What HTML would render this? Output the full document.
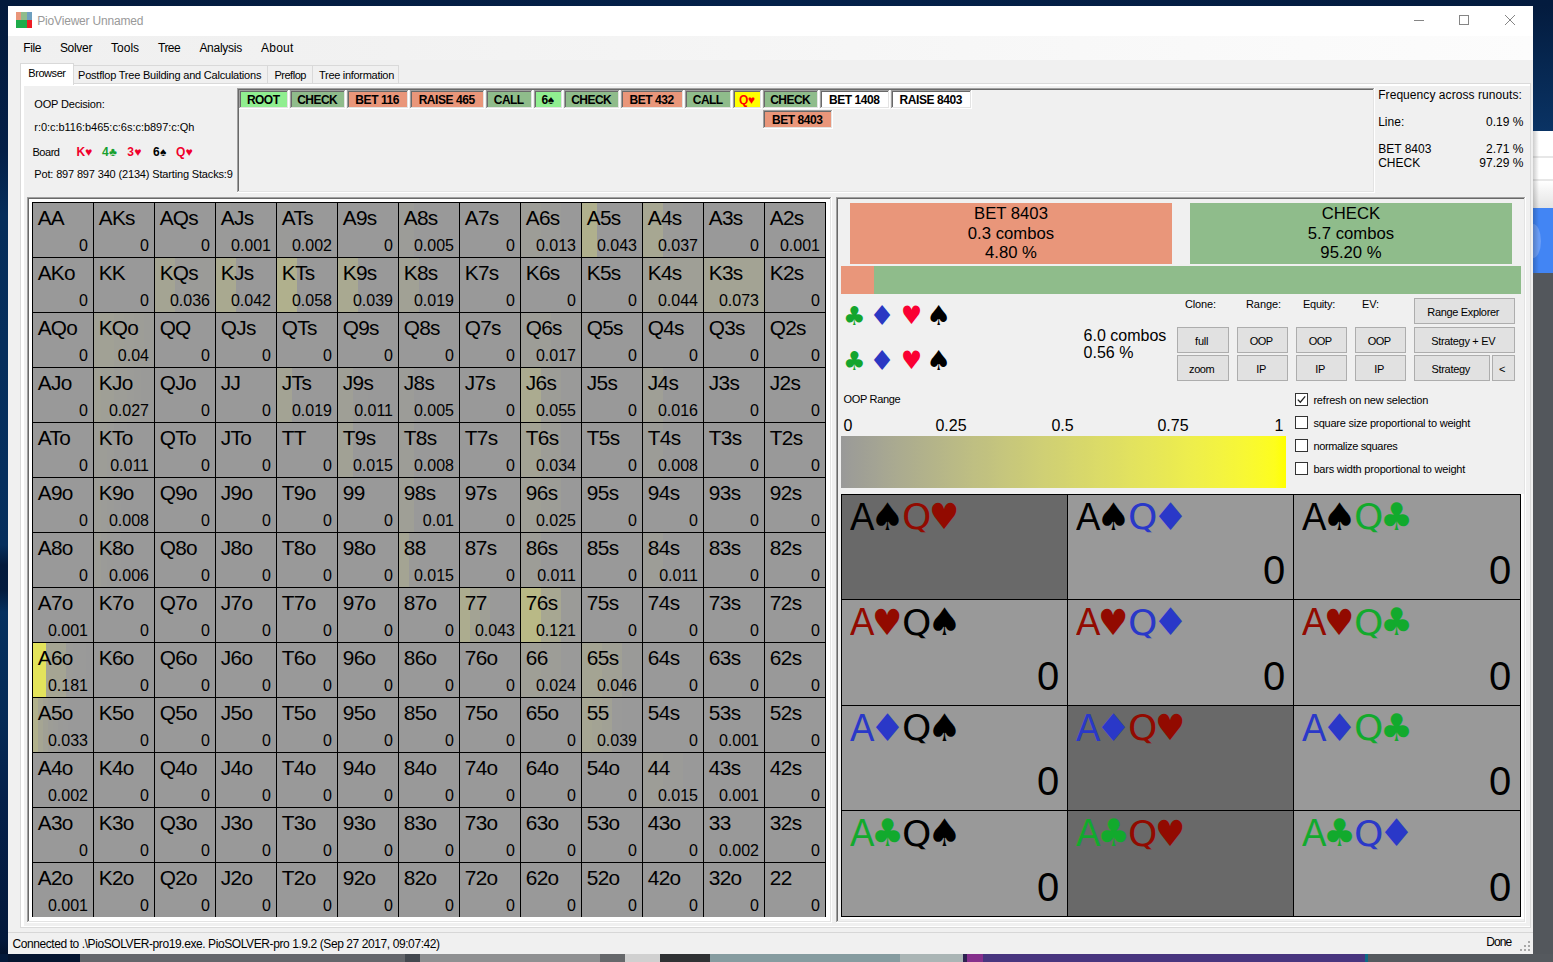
<!DOCTYPE html>
<html><head><meta charset="utf-8"><title>PioViewer Unnamed</title><style>html,body{margin:0;padding:0}body{width:1553px;height:962px;overflow:hidden;position:relative;background:#04204a;font-family:"Liberation Sans",sans-serif}
body>div,body>span,body>svg{position:absolute;display:block}body>span{white-space:pre}</style></head><body>
<div style="left:0;top:0;width:1553px;height:962px;background:#031a3c"></div>
<div style="left:0px;top:0px;width:8px;height:962px;background:linear-gradient(180deg,#031a3c 0,#041f47 150px,#052d5a 215px,#052f5e 480px,#052e5c 545px,#031a3c 565px,#031b3e 590px,#04305f 612px,#042a56 720px,#04204a 800px,#03183a 940px,#020f24 962px);"></div>
<div style="left:1533px;top:0px;width:20px;height:131px;background:linear-gradient(180deg,#031a3c 0,#06264f 60px,#0a3364 131px);"></div>
<div style="left:0px;top:0px;width:1553px;height:6px;background:linear-gradient(90deg,#031a3c 0,#04214a 50%,#031b3e 100%);"></div>
<div style="left:1533px;top:131px;width:20px;height:77px;background:linear-gradient(180deg,#fff 0,#fff 25px,#cfcfcf 26px,#fff 27px,#fff 48px,#cfcfcf 49px,#fff 50px,#f4f4f4 60px,#e4e4e4 77px);"></div>
<div style="left:1533px;top:208px;width:20px;height:65px;background:#4285f4;"></div>
<div style="left:1533px;top:224px;width:8px;height:34px;background:#6a9df6;border-radius:0 8px 8px 0 / 0 17px 17px 0"></div>
<div style="left:1533px;top:131px;width:6px;height:823px;background:linear-gradient(90deg,rgba(0,0,0,.2),rgba(0,0,0,0));"></div>
<div style="left:1533px;top:273px;width:20px;height:689px;background:#53575c;"></div>
<div style="left:0px;top:954px;width:8px;height:8px;background:#041a3a;"></div>
<div style="left:8px;top:954px;width:72px;height:8px;background:#05152f;"></div>
<div style="left:80px;top:954px;width:325px;height:8px;background:#64666b;"></div>
<div style="left:405px;top:954px;width:15px;height:8px;background:#44484f;"></div>
<div style="left:420px;top:954px;width:180px;height:8px;background:#8f9092;"></div>
<div style="left:600px;top:954px;width:25px;height:8px;background:#66686b;"></div>
<div style="left:625px;top:954px;width:35px;height:8px;background:#d0d0d0;"></div>
<div style="left:660px;top:954px;width:50px;height:8px;background:#303234;"></div>
<div style="left:710px;top:954px;width:190px;height:8px;background:#869ca0;"></div>
<div style="left:900px;top:954px;width:63px;height:8px;background:#aab5b5;"></div>
<div style="left:963px;top:954px;width:4px;height:8px;background:#2d2050;"></div>
<div style="left:967px;top:954px;width:16px;height:8px;background:#85308c;"></div>
<div style="left:983px;top:954px;width:382px;height:8px;background:#48357f;"></div>
<div style="left:1365px;top:954px;width:3px;height:8px;background:#0e6a86;"></div>
<div style="left:1368px;top:954px;width:185px;height:8px;background:#55595e;"></div>
<div style="left:8px;top:6px;width:1525px;height:948px;background:#f0f0f0;"></div>
<div style="left:8px;top:6px;width:1525px;height:30px;background:#fff;"></div>
<div style="left:16px;top:12px;width:5px;height:8px;background:#e9967a;"></div>
<div style="left:21px;top:12px;width:6px;height:8px;background:#8fbc8b;"></div>
<div style="left:27px;top:12px;width:5px;height:8px;background:#6e9fbf;"></div>
<div style="left:16px;top:20px;width:11px;height:8px;background:#1fab4a;"></div>
<div style="left:27px;top:20px;width:5px;height:8px;background:#ed1c24;"></div>
<span style="left:37.30px;top:15.00px;font-size:12px;line-height:12px;color:#999;letter-spacing:-0.187px;">PioViewer Unnamed</span>
<div style="left:1414px;top:20px;width:10px;height:1px;background:#858585;"></div>
<div style="left:1459px;top:15px;width:10px;height:10px;background:transparent;border:1px solid #858585;box-sizing:border-box"></div>
<svg style="left:1504px;top:14px" width="12" height="12" viewBox="0 0 12 12"><path d="M1 1 L11 11 M11 1 L1 11" stroke="#858585" stroke-width="1" fill="none"/></svg>
<div style="left:8px;top:36px;width:1525px;height:24px;background:linear-gradient(90deg,#f0f0f0 0,#f1f1f1 18%,#fcfcfc 100%);"></div>
<span style="left:23.20px;top:42.00px;font-size:12px;line-height:12px;color:#000;letter-spacing:-0.334px;">File</span>
<span style="left:59.90px;top:42.00px;font-size:12px;line-height:12px;color:#000;letter-spacing:-0.303px;">Solver</span>
<span style="left:111.00px;top:42.00px;font-size:12px;line-height:12px;color:#000;letter-spacing:0.017px;">Tools</span>
<span style="left:158.10px;top:42.00px;font-size:12px;line-height:12px;color:#000;letter-spacing:-0.582px;">Tree</span>
<span style="left:199.40px;top:42.00px;font-size:12px;line-height:12px;color:#000;letter-spacing:-0.273px;">Analysis</span>
<span style="left:261.00px;top:42.00px;font-size:12px;line-height:12px;color:#000;letter-spacing:0.228px;">About</span>
<div style="left:20px;top:83px;width:1511px;height:845px;background:#fff;border:1px solid #dadada;box-sizing:border-box"></div>
<div style="left:24px;top:86px;width:1506px;height:840px;background:#f0f0f0;"></div>
<div style="left:73px;top:65px;width:195px;height:19px;background:#f0f0f0;border:1px solid #d9d9d9;box-sizing:border-box"></div>
<div style="left:267px;top:65px;width:46px;height:19px;background:#f0f0f0;border:1px solid #d9d9d9;box-sizing:border-box"></div>
<div style="left:312px;top:65px;width:87px;height:19px;background:#f0f0f0;border:1px solid #d9d9d9;box-sizing:border-box"></div>
<div style="left:20px;top:63px;width:54px;height:22px;background:#fff;border:1px solid #d9d9d9;border-bottom:none;box-sizing:border-box"></div>
<span style="left:28.30px;top:68.00px;font-size:11px;line-height:11px;color:#000;letter-spacing:-0.435px;">Browser</span>
<span style="left:78.00px;top:70.00px;font-size:11px;line-height:11px;color:#000;letter-spacing:-0.210px;">Postflop Tree Building and Calculations</span>
<span style="left:274.40px;top:70.00px;font-size:11px;line-height:11px;color:#000;letter-spacing:-0.465px;">Preflop</span>
<span style="left:319.00px;top:70.00px;font-size:11px;line-height:11px;color:#000;letter-spacing:-0.293px;">Tree information</span>
<span style="left:34.30px;top:99.00px;font-size:11px;line-height:11px;color:#000;letter-spacing:-0.173px;">OOP Decision:</span>
<span style="left:34.30px;top:122.00px;font-size:11px;line-height:11px;color:#000;letter-spacing:-0.038px;">r:0:c:b116:b465:c:6s:c:b897:c:Qh</span>
<span style="left:32.50px;top:147.00px;font-size:11px;line-height:11px;color:#000;letter-spacing:-0.471px;">Board</span>
<span style="left:76.50px;top:146.00px;font-size:12px;line-height:12px;color:#f0002c;font-weight:700;letter-spacing:-0.146px;">K♥</span>
<span style="left:102.00px;top:146.00px;font-size:12px;line-height:12px;color:#18a030;font-weight:700;letter-spacing:0.225px;">4♣</span>
<span style="left:127.30px;top:146.00px;font-size:12px;line-height:12px;color:#f0002c;font-weight:700;letter-spacing:0.200px;">3♥</span>
<span style="left:153.00px;top:146.00px;font-size:12px;line-height:12px;color:#000;font-weight:700;letter-spacing:0.275px;">6♠</span>
<span style="left:176.00px;top:146.00px;font-size:12px;line-height:12px;color:#f0002c;font-weight:700;letter-spacing:0.271px;">Q♥</span>
<span style="left:34.30px;top:169.00px;font-size:11px;line-height:11px;color:#000;letter-spacing:-0.158px;">Pot: 897 897 340 (2134) Starting Stacks:9</span>
<div style="left:237px;top:88px;width:1138px;height:105px;background:#fff;"></div>
<div style="left:237px;top:88px;width:1137px;height:104px;background:#a0a0a0;"></div>
<div style="left:238px;top:89px;width:1136px;height:103px;background:#e3e3e3;"></div>
<div style="left:238px;top:89px;width:1135px;height:102px;background:#696969;"></div>
<div style="left:239px;top:90px;width:1134px;height:101px;background:#f0f0f0;"></div>
<div style="left:239px;top:90px;width:50px;height:19px;background:#fff;"></div>
<div style="left:239px;top:90px;width:49px;height:18px;background:#a0a0a0;"></div>
<div style="left:240px;top:91px;width:48px;height:17px;background:#e3e3e3;"></div>
<div style="left:240px;top:91px;width:47px;height:16px;background:#696969;"></div>
<div style="left:241px;top:92px;width:46px;height:15px;background:#90ee90;"></div>
<span style="left:246.99px;top:94.00px;font-size:12px;line-height:12px;color:#000;font-weight:700;letter-spacing:-0.563px;">ROOT</span>
<div style="left:290px;top:90px;width:56px;height:19px;background:#fff;"></div>
<div style="left:290px;top:90px;width:55px;height:18px;background:#a0a0a0;"></div>
<div style="left:291px;top:91px;width:54px;height:17px;background:#e3e3e3;"></div>
<div style="left:291px;top:91px;width:53px;height:16px;background:#696969;"></div>
<div style="left:292px;top:92px;width:52px;height:15px;background:#8fbc8b;"></div>
<span style="left:297.25px;top:94.00px;font-size:12px;line-height:12px;color:#000;font-weight:700;letter-spacing:-0.555px;">CHECK</span>
<div style="left:347px;top:90px;width:62px;height:19px;background:#fff;"></div>
<div style="left:347px;top:90px;width:61px;height:18px;background:#a0a0a0;"></div>
<div style="left:348px;top:91px;width:60px;height:17px;background:#e3e3e3;"></div>
<div style="left:348px;top:91px;width:59px;height:16px;background:#696969;"></div>
<div style="left:349px;top:92px;width:58px;height:15px;background:#e9967a;"></div>
<span style="left:355.37px;top:94.00px;font-size:12px;line-height:12px;color:#000;font-weight:700;letter-spacing:-0.434px;">BET 116</span>
<div style="left:410px;top:90px;width:75px;height:19px;background:#fff;"></div>
<div style="left:410px;top:90px;width:74px;height:18px;background:#a0a0a0;"></div>
<div style="left:411px;top:91px;width:73px;height:17px;background:#e3e3e3;"></div>
<div style="left:411px;top:91px;width:72px;height:16px;background:#696969;"></div>
<div style="left:412px;top:92px;width:71px;height:15px;background:#e9967a;"></div>
<span style="left:418.64px;top:94.00px;font-size:12px;line-height:12px;color:#000;font-weight:700;letter-spacing:-0.434px;">RAISE 465</span>
<div style="left:486px;top:90px;width:47px;height:19px;background:#fff;"></div>
<div style="left:486px;top:90px;width:46px;height:18px;background:#a0a0a0;"></div>
<div style="left:487px;top:91px;width:45px;height:17px;background:#e3e3e3;"></div>
<div style="left:487px;top:91px;width:44px;height:16px;background:#696969;"></div>
<div style="left:488px;top:92px;width:43px;height:15px;background:#8fbc8b;"></div>
<span style="left:493.74px;top:94.00px;font-size:12px;line-height:12px;color:#000;font-weight:700;letter-spacing:-0.520px;">CALL</span>
<div style="left:534px;top:90px;width:29px;height:19px;background:#fff;"></div>
<div style="left:534px;top:90px;width:28px;height:18px;background:#a0a0a0;"></div>
<div style="left:535px;top:91px;width:27px;height:17px;background:#e3e3e3;"></div>
<div style="left:535px;top:91px;width:26px;height:16px;background:#696969;"></div>
<div style="left:536px;top:92px;width:25px;height:15px;background:#90ee90;"></div>
<span style="left:541.60px;top:94.00px;font-size:12px;line-height:12px;color:#000;font-weight:700;letter-spacing:-0.424px;">6♠</span>
<div style="left:564px;top:90px;width:56px;height:19px;background:#fff;"></div>
<div style="left:564px;top:90px;width:55px;height:18px;background:#a0a0a0;"></div>
<div style="left:565px;top:91px;width:54px;height:17px;background:#e3e3e3;"></div>
<div style="left:565px;top:91px;width:53px;height:16px;background:#696969;"></div>
<div style="left:566px;top:92px;width:52px;height:15px;background:#8fbc8b;"></div>
<span style="left:571.25px;top:94.00px;font-size:12px;line-height:12px;color:#000;font-weight:700;letter-spacing:-0.555px;">CHECK</span>
<div style="left:621px;top:90px;width:63px;height:19px;background:#fff;"></div>
<div style="left:621px;top:90px;width:62px;height:18px;background:#a0a0a0;"></div>
<div style="left:622px;top:91px;width:61px;height:17px;background:#e3e3e3;"></div>
<div style="left:622px;top:91px;width:60px;height:16px;background:#696969;"></div>
<div style="left:623px;top:92px;width:59px;height:15px;background:#e9967a;"></div>
<span style="left:629.56px;top:94.00px;font-size:12px;line-height:12px;color:#000;font-weight:700;letter-spacing:-0.440px;">BET 432</span>
<div style="left:685px;top:90px;width:47px;height:19px;background:#fff;"></div>
<div style="left:685px;top:90px;width:46px;height:18px;background:#a0a0a0;"></div>
<div style="left:686px;top:91px;width:45px;height:17px;background:#e3e3e3;"></div>
<div style="left:686px;top:91px;width:44px;height:16px;background:#696969;"></div>
<div style="left:687px;top:92px;width:43px;height:15px;background:#8fbc8b;"></div>
<span style="left:692.74px;top:94.00px;font-size:12px;line-height:12px;color:#000;font-weight:700;letter-spacing:-0.520px;">CALL</span>
<div style="left:733px;top:90px;width:29px;height:19px;background:#fff;"></div>
<div style="left:733px;top:90px;width:28px;height:18px;background:#a0a0a0;"></div>
<div style="left:734px;top:91px;width:27px;height:17px;background:#e3e3e3;"></div>
<div style="left:734px;top:91px;width:26px;height:16px;background:#696969;"></div>
<div style="left:735px;top:92px;width:25px;height:15px;background:#ffff00;"></div>
<span style="left:739.01px;top:94.00px;font-size:12px;line-height:12px;color:#ff0000;font-weight:700;letter-spacing:-0.535px;">Q♥</span>
<div style="left:763px;top:90px;width:56px;height:19px;background:#fff;"></div>
<div style="left:763px;top:90px;width:55px;height:18px;background:#a0a0a0;"></div>
<div style="left:764px;top:91px;width:54px;height:17px;background:#e3e3e3;"></div>
<div style="left:764px;top:91px;width:53px;height:16px;background:#696969;"></div>
<div style="left:765px;top:92px;width:52px;height:15px;background:#8fbc8b;"></div>
<span style="left:770.25px;top:94.00px;font-size:12px;line-height:12px;color:#000;font-weight:700;letter-spacing:-0.555px;">CHECK</span>
<div style="left:820px;top:90px;width:70px;height:19px;background:#fff;"></div>
<div style="left:820px;top:90px;width:69px;height:18px;background:#a0a0a0;"></div>
<div style="left:821px;top:91px;width:68px;height:17px;background:#e3e3e3;"></div>
<div style="left:821px;top:91px;width:67px;height:16px;background:#696969;"></div>
<div style="left:822px;top:92px;width:66px;height:15px;background:#fff;"></div>
<span style="left:828.94px;top:94.00px;font-size:12px;line-height:12px;color:#000;font-weight:700;letter-spacing:-0.439px;">BET 1408</span>
<div style="left:891px;top:90px;width:81px;height:19px;background:#fff;"></div>
<div style="left:891px;top:90px;width:80px;height:18px;background:#a0a0a0;"></div>
<div style="left:892px;top:91px;width:79px;height:17px;background:#e3e3e3;"></div>
<div style="left:892px;top:91px;width:78px;height:16px;background:#696969;"></div>
<div style="left:893px;top:92px;width:77px;height:15px;background:#fff;"></div>
<span style="left:899.52px;top:94.00px;font-size:12px;line-height:12px;color:#000;font-weight:700;letter-spacing:-0.434px;">RAISE 8403</span>
<div style="left:763px;top:110px;width:70px;height:19px;background:#fff;"></div>
<div style="left:763px;top:110px;width:69px;height:18px;background:#a0a0a0;"></div>
<div style="left:764px;top:111px;width:68px;height:17px;background:#e3e3e3;"></div>
<div style="left:764px;top:111px;width:67px;height:16px;background:#696969;"></div>
<div style="left:765px;top:112px;width:66px;height:15px;background:#e9967a;"></div>
<span style="left:771.94px;top:114.00px;font-size:12px;line-height:12px;color:#000;font-weight:700;letter-spacing:-0.439px;">BET 8403</span>
<span style="left:1378.20px;top:89.00px;font-size:12px;line-height:12px;color:#000;letter-spacing:0.065px;">Frequency across runouts:</span>
<span style="left:1378.20px;top:116.00px;font-size:12px;line-height:12px;color:#000;">Line:</span>
<span style="left:1486.04px;top:116.00px;font-size:12px;line-height:12px;color:#000;">0.19 %</span>
<span style="left:1378.20px;top:143.00px;font-size:12px;line-height:12px;color:#000;">BET 8403</span>
<span style="left:1486.04px;top:143.00px;font-size:12px;line-height:12px;color:#000;">2.71 %</span>
<span style="left:1378.20px;top:157.00px;font-size:12px;line-height:12px;color:#000;">CHECK</span>
<span style="left:1479.37px;top:157.00px;font-size:12px;line-height:12px;color:#000;">97.29 %</span>
<div style="left:27px;top:197px;width:805px;height:726px;background:#fff;"></div>
<div style="left:27px;top:197px;width:804px;height:725px;background:#a0a0a0;"></div>
<div style="left:28px;top:198px;width:803px;height:724px;background:#e3e3e3;"></div>
<div style="left:28px;top:198px;width:802px;height:723px;background:#696969;"></div>
<div style="left:29px;top:199px;width:801px;height:722px;background:#fff;"></div>
<div style="left:32px;top:202px;width:794px;height:715px;background:#000;"></div>
<div style="left:33px;top:203px;width:60px;height:54px;background:#999999;"></div>
<span style="left:37.70px;top:208.00px;font-size:20.8px;line-height:20.8px;color:#000;letter-spacing:-0.734px;">AA</span>
<span style="left:79.10px;top:238.00px;font-size:16px;line-height:16px;color:#000;">0</span>
<div style="left:94px;top:203px;width:60px;height:54px;background:#999999;"></div>
<span style="left:98.70px;top:208.00px;font-size:20.8px;line-height:20.8px;color:#000;letter-spacing:-0.672px;">AKs</span>
<span style="left:140.10px;top:238.00px;font-size:16px;line-height:16px;color:#000;">0</span>
<div style="left:155px;top:203px;width:60px;height:54px;background:#999999;"></div>
<span style="left:159.70px;top:208.00px;font-size:20.8px;line-height:20.8px;color:#000;letter-spacing:-0.713px;">AQs</span>
<span style="left:201.10px;top:238.00px;font-size:16px;line-height:16px;color:#000;">0</span>
<div style="left:216px;top:203px;width:60px;height:54px;background:linear-gradient(90deg,#9a9a99 0.0px,#9a9a99 15.0px,#999999 15.0px,#999999 30.0px,#999999 30.0px,#999999 45.0px,#999999 45.0px,#999999 60.0px);"></div>
<span style="left:220.70px;top:208.00px;font-size:20.8px;line-height:20.8px;color:#000;letter-spacing:-0.611px;">AJs</span>
<span style="left:230.96px;top:238.00px;font-size:16px;line-height:16px;color:#000;">0.001</span>
<div style="left:277px;top:203px;width:60px;height:54px;background:linear-gradient(90deg,#9a9a98 0.0px,#9a9a98 15.0px,#999999 15.0px,#999999 30.0px,#999999 30.0px,#999999 45.0px,#999999 45.0px,#999999 60.0px);"></div>
<span style="left:281.70px;top:208.00px;font-size:20.8px;line-height:20.8px;color:#000;letter-spacing:-0.584px;">ATs</span>
<span style="left:291.96px;top:238.00px;font-size:16px;line-height:16px;color:#000;">0.002</span>
<div style="left:338px;top:203px;width:60px;height:54px;background:#999999;"></div>
<span style="left:342.70px;top:208.00px;font-size:20.8px;line-height:20.8px;color:#000;letter-spacing:-0.632px;">A9s</span>
<span style="left:384.10px;top:238.00px;font-size:16px;line-height:16px;color:#000;">0</span>
<div style="left:399px;top:203px;width:60px;height:54px;background:linear-gradient(90deg,#9c9c98 0.0px,#9c9c98 15.0px,#999999 15.0px,#999999 30.0px,#999999 30.0px,#999999 45.0px,#999999 45.0px,#999999 60.0px);"></div>
<span style="left:403.70px;top:208.00px;font-size:20.8px;line-height:20.8px;color:#000;letter-spacing:-0.632px;">A8s</span>
<span style="left:413.96px;top:238.00px;font-size:16px;line-height:16px;color:#000;">0.005</span>
<div style="left:460px;top:203px;width:60px;height:54px;background:#999999;"></div>
<span style="left:464.70px;top:208.00px;font-size:20.8px;line-height:20.8px;color:#000;letter-spacing:-0.632px;">A7s</span>
<span style="left:506.10px;top:238.00px;font-size:16px;line-height:16px;color:#000;">0</span>
<div style="left:521px;top:203px;width:60px;height:54px;background:linear-gradient(90deg,#9d9d97 0.0px,#9d9d97 20.0px,#9b9b98 20.0px,#9b9b98 40.0px,#999999 40.0px,#999999 60.0px);"></div>
<span style="left:525.70px;top:208.00px;font-size:20.8px;line-height:20.8px;color:#000;letter-spacing:-0.632px;">A6s</span>
<span style="left:535.96px;top:238.00px;font-size:16px;line-height:16px;color:#000;">0.013</span>
<div style="left:582px;top:203px;width:60px;height:54px;background:linear-gradient(90deg,#b0b08d 0.0px,#b0b08d 15.0px,#999999 15.0px,#999999 30.0px,#999999 30.0px,#999999 45.0px,#999999 45.0px,#999999 60.0px);"></div>
<span style="left:586.70px;top:208.00px;font-size:20.8px;line-height:20.8px;color:#000;letter-spacing:-0.632px;">A5s</span>
<span style="left:596.96px;top:238.00px;font-size:16px;line-height:16px;color:#000;">0.043</span>
<div style="left:643px;top:203px;width:60px;height:54px;background:linear-gradient(90deg,#a7a792 0.0px,#a7a792 20.0px,#9a9a98 20.0px,#9a9a98 40.0px,#999999 40.0px,#999999 60.0px);"></div>
<span style="left:647.70px;top:208.00px;font-size:20.8px;line-height:20.8px;color:#000;letter-spacing:-0.632px;">A4s</span>
<span style="left:657.96px;top:238.00px;font-size:16px;line-height:16px;color:#000;">0.037</span>
<div style="left:704px;top:203px;width:60px;height:54px;background:#999999;"></div>
<span style="left:708.70px;top:208.00px;font-size:20.8px;line-height:20.8px;color:#000;letter-spacing:-0.632px;">A3s</span>
<span style="left:750.10px;top:238.00px;font-size:16px;line-height:16px;color:#000;">0</span>
<div style="left:765px;top:203px;width:60px;height:54px;background:#999999;"></div>
<span style="left:769.70px;top:208.00px;font-size:20.8px;line-height:20.8px;color:#000;letter-spacing:-0.632px;">A2s</span>
<span style="left:779.96px;top:238.00px;font-size:16px;line-height:16px;color:#000;">0.001</span>
<div style="left:33px;top:258px;width:60px;height:54px;background:#999999;"></div>
<span style="left:37.70px;top:263.00px;font-size:20.8px;line-height:20.8px;color:#000;letter-spacing:-0.693px;">AKo</span>
<span style="left:79.10px;top:293.00px;font-size:16px;line-height:16px;color:#000;">0</span>
<div style="left:94px;top:258px;width:60px;height:54px;background:#999999;"></div>
<span style="left:98.70px;top:263.00px;font-size:20.8px;line-height:20.8px;color:#000;letter-spacing:-0.734px;">KK</span>
<span style="left:140.10px;top:293.00px;font-size:16px;line-height:16px;color:#000;">0</span>
<div style="left:155px;top:258px;width:60px;height:54px;background:linear-gradient(90deg,#a4a493 0.0px,#a4a493 20.0px,#9b9b98 20.0px,#9b9b98 40.0px,#9b9b98 40.0px,#9b9b98 60.0px);"></div>
<span style="left:159.70px;top:263.00px;font-size:20.8px;line-height:20.8px;color:#000;letter-spacing:-0.713px;">KQs</span>
<span style="left:169.96px;top:293.00px;font-size:16px;line-height:16px;color:#000;">0.036</span>
<div style="left:216px;top:258px;width:60px;height:54px;background:linear-gradient(90deg,#a9a990 0.0px,#a9a990 20.0px,#999999 20.0px,#999999 40.0px,#999999 40.0px,#999999 60.0px);"></div>
<span style="left:220.70px;top:263.00px;font-size:20.8px;line-height:20.8px;color:#000;letter-spacing:-0.611px;">KJs</span>
<span style="left:230.96px;top:293.00px;font-size:16px;line-height:16px;color:#000;">0.042</span>
<div style="left:277px;top:258px;width:60px;height:54px;background:linear-gradient(90deg,#b0b08d 0.0px,#b0b08d 20.0px,#999999 20.0px,#999999 40.0px,#999999 40.0px,#999999 60.0px);"></div>
<span style="left:281.70px;top:263.00px;font-size:20.8px;line-height:20.8px;color:#000;letter-spacing:-0.611px;">KTs</span>
<span style="left:291.96px;top:293.00px;font-size:16px;line-height:16px;color:#000;">0.058</span>
<div style="left:338px;top:258px;width:60px;height:54px;background:linear-gradient(90deg,#a9a991 0.0px,#a9a991 20.0px,#999999 20.0px,#999999 40.0px,#999999 40.0px,#999999 60.0px);"></div>
<span style="left:342.70px;top:263.00px;font-size:20.8px;line-height:20.8px;color:#000;letter-spacing:-0.632px;">K9s</span>
<span style="left:352.96px;top:293.00px;font-size:16px;line-height:16px;color:#000;">0.039</span>
<div style="left:399px;top:258px;width:60px;height:54px;background:linear-gradient(90deg,#a1a195 0.0px,#a1a195 20.0px,#999999 20.0px,#999999 40.0px,#999999 40.0px,#999999 60.0px);"></div>
<span style="left:403.70px;top:263.00px;font-size:20.8px;line-height:20.8px;color:#000;letter-spacing:-0.632px;">K8s</span>
<span style="left:413.96px;top:293.00px;font-size:16px;line-height:16px;color:#000;">0.019</span>
<div style="left:460px;top:258px;width:60px;height:54px;background:#999999;"></div>
<span style="left:464.70px;top:263.00px;font-size:20.8px;line-height:20.8px;color:#000;letter-spacing:-0.632px;">K7s</span>
<span style="left:506.10px;top:293.00px;font-size:16px;line-height:16px;color:#000;">0</span>
<div style="left:521px;top:258px;width:60px;height:54px;background:#999999;"></div>
<span style="left:525.70px;top:263.00px;font-size:20.8px;line-height:20.8px;color:#000;letter-spacing:-0.632px;">K6s</span>
<span style="left:567.10px;top:293.00px;font-size:16px;line-height:16px;color:#000;">0</span>
<div style="left:582px;top:258px;width:60px;height:54px;background:#999999;"></div>
<span style="left:586.70px;top:263.00px;font-size:20.8px;line-height:20.8px;color:#000;letter-spacing:-0.632px;">K5s</span>
<span style="left:628.10px;top:293.00px;font-size:16px;line-height:16px;color:#000;">0</span>
<div style="left:643px;top:258px;width:60px;height:54px;background:linear-gradient(90deg,#9f9f96 0.0px,#9f9f96 30.0px,#9f9f96 30.0px,#9f9f96 60.0px);"></div>
<span style="left:647.70px;top:263.00px;font-size:20.8px;line-height:20.8px;color:#000;letter-spacing:-0.632px;">K4s</span>
<span style="left:657.96px;top:293.00px;font-size:16px;line-height:16px;color:#000;">0.044</span>
<div style="left:704px;top:258px;width:60px;height:54px;background:linear-gradient(90deg,#a3a394 0.0px,#a3a394 20.0px,#a3a394 20.0px,#a3a394 40.0px,#a3a394 40.0px,#a3a394 60.0px);"></div>
<span style="left:708.70px;top:263.00px;font-size:20.8px;line-height:20.8px;color:#000;letter-spacing:-0.632px;">K3s</span>
<span style="left:718.96px;top:293.00px;font-size:16px;line-height:16px;color:#000;">0.073</span>
<div style="left:765px;top:258px;width:60px;height:54px;background:#999999;"></div>
<span style="left:769.70px;top:263.00px;font-size:20.8px;line-height:20.8px;color:#000;letter-spacing:-0.632px;">K2s</span>
<span style="left:811.10px;top:293.00px;font-size:16px;line-height:16px;color:#000;">0</span>
<div style="left:33px;top:313px;width:60px;height:54px;background:#999999;"></div>
<span style="left:37.70px;top:318.00px;font-size:20.8px;line-height:20.8px;color:#000;letter-spacing:-0.734px;">AQo</span>
<span style="left:79.10px;top:348.00px;font-size:16px;line-height:16px;color:#000;">0</span>
<div style="left:94px;top:313px;width:60px;height:54px;background:linear-gradient(90deg,#a1a195 0.0px,#a1a195 10.0px,#a1a195 10.0px,#a1a195 20.0px,#9f9f96 20.0px,#9f9f96 30.0px,#9e9e97 30.0px,#9e9e97 40.0px,#9d9d97 40.0px,#9d9d97 50.0px,#9c9c98 50.0px,#9c9c98 60.0px);"></div>
<span style="left:98.70px;top:318.00px;font-size:20.8px;line-height:20.8px;color:#000;letter-spacing:-0.734px;">KQo</span>
<span style="left:117.86px;top:348.00px;font-size:16px;line-height:16px;color:#000;">0.04</span>
<div style="left:155px;top:313px;width:60px;height:54px;background:#999999;"></div>
<span style="left:159.70px;top:318.00px;font-size:20.8px;line-height:20.8px;color:#000;letter-spacing:-0.856px;">QQ</span>
<span style="left:201.10px;top:348.00px;font-size:16px;line-height:16px;color:#000;">0</span>
<div style="left:216px;top:313px;width:60px;height:54px;background:#999999;"></div>
<span style="left:220.70px;top:318.00px;font-size:20.8px;line-height:20.8px;color:#000;letter-spacing:-0.652px;">QJs</span>
<span style="left:262.10px;top:348.00px;font-size:16px;line-height:16px;color:#000;">0</span>
<div style="left:277px;top:313px;width:60px;height:54px;background:#999999;"></div>
<span style="left:281.70px;top:318.00px;font-size:20.8px;line-height:20.8px;color:#000;letter-spacing:-0.652px;">QTs</span>
<span style="left:323.10px;top:348.00px;font-size:16px;line-height:16px;color:#000;">0</span>
<div style="left:338px;top:313px;width:60px;height:54px;background:#999999;"></div>
<span style="left:342.70px;top:318.00px;font-size:20.8px;line-height:20.8px;color:#000;letter-spacing:-0.672px;">Q9s</span>
<span style="left:384.10px;top:348.00px;font-size:16px;line-height:16px;color:#000;">0</span>
<div style="left:399px;top:313px;width:60px;height:54px;background:#999999;"></div>
<span style="left:403.70px;top:318.00px;font-size:20.8px;line-height:20.8px;color:#000;letter-spacing:-0.672px;">Q8s</span>
<span style="left:445.10px;top:348.00px;font-size:16px;line-height:16px;color:#000;">0</span>
<div style="left:460px;top:313px;width:60px;height:54px;background:#999999;"></div>
<span style="left:464.70px;top:318.00px;font-size:20.8px;line-height:20.8px;color:#000;letter-spacing:-0.672px;">Q7s</span>
<span style="left:506.10px;top:348.00px;font-size:16px;line-height:16px;color:#000;">0</span>
<div style="left:521px;top:313px;width:60px;height:54px;background:linear-gradient(90deg,#9d9d97 0.0px,#9d9d97 30.0px,#9a9a98 30.0px,#9a9a98 60.0px);"></div>
<span style="left:525.70px;top:318.00px;font-size:20.8px;line-height:20.8px;color:#000;letter-spacing:-0.672px;">Q6s</span>
<span style="left:535.96px;top:348.00px;font-size:16px;line-height:16px;color:#000;">0.017</span>
<div style="left:582px;top:313px;width:60px;height:54px;background:#999999;"></div>
<span style="left:586.70px;top:318.00px;font-size:20.8px;line-height:20.8px;color:#000;letter-spacing:-0.672px;">Q5s</span>
<span style="left:628.10px;top:348.00px;font-size:16px;line-height:16px;color:#000;">0</span>
<div style="left:643px;top:313px;width:60px;height:54px;background:#999999;"></div>
<span style="left:647.70px;top:318.00px;font-size:20.8px;line-height:20.8px;color:#000;letter-spacing:-0.672px;">Q4s</span>
<span style="left:689.10px;top:348.00px;font-size:16px;line-height:16px;color:#000;">0</span>
<div style="left:704px;top:313px;width:60px;height:54px;background:#999999;"></div>
<span style="left:708.70px;top:318.00px;font-size:20.8px;line-height:20.8px;color:#000;letter-spacing:-0.672px;">Q3s</span>
<span style="left:750.10px;top:348.00px;font-size:16px;line-height:16px;color:#000;">0</span>
<div style="left:765px;top:313px;width:60px;height:54px;background:#999999;"></div>
<span style="left:769.70px;top:318.00px;font-size:20.8px;line-height:20.8px;color:#000;letter-spacing:-0.672px;">Q2s</span>
<span style="left:811.10px;top:348.00px;font-size:16px;line-height:16px;color:#000;">0</span>
<div style="left:33px;top:368px;width:60px;height:54px;background:#999999;"></div>
<span style="left:37.70px;top:373.00px;font-size:20.8px;line-height:20.8px;color:#000;letter-spacing:-0.632px;">AJo</span>
<span style="left:79.10px;top:403.00px;font-size:16px;line-height:16px;color:#000;">0</span>
<div style="left:94px;top:368px;width:60px;height:54px;background:linear-gradient(90deg,#a0a095 0.0px,#a0a095 6.67px,#9f9f96 6.67px,#9f9f96 13.33px,#9f9f96 13.33px,#9f9f96 20.0px,#9d9d97 20.0px,#9d9d97 26.67px,#9d9d97 26.67px,#9d9d97 33.33px,#9c9c98 33.33px,#9c9c98 40.0px,#9b9b98 40.0px,#9b9b98 46.67px,#9a9a98 46.67px,#9a9a98 53.33px,#9a9a98 53.33px,#9a9a98 60.0px);"></div>
<span style="left:98.70px;top:373.00px;font-size:20.8px;line-height:20.8px;color:#000;letter-spacing:-0.632px;">KJo</span>
<span style="left:108.96px;top:403.00px;font-size:16px;line-height:16px;color:#000;">0.027</span>
<div style="left:155px;top:368px;width:60px;height:54px;background:#999999;"></div>
<span style="left:159.70px;top:373.00px;font-size:20.8px;line-height:20.8px;color:#000;letter-spacing:-0.672px;">QJo</span>
<span style="left:201.10px;top:403.00px;font-size:16px;line-height:16px;color:#000;">0</span>
<div style="left:216px;top:368px;width:60px;height:54px;background:#999999;"></div>
<span style="left:220.70px;top:373.00px;font-size:20.8px;line-height:20.8px;color:#000;letter-spacing:-0.550px;">JJ</span>
<span style="left:262.10px;top:403.00px;font-size:16px;line-height:16px;color:#000;">0</span>
<div style="left:277px;top:368px;width:60px;height:54px;background:linear-gradient(90deg,#a3a394 0.0px,#a3a394 15.0px,#999999 15.0px,#999999 30.0px,#999999 30.0px,#999999 45.0px,#999999 45.0px,#999999 60.0px);"></div>
<span style="left:281.70px;top:373.00px;font-size:20.8px;line-height:20.8px;color:#000;letter-spacing:-0.550px;">JTs</span>
<span style="left:291.96px;top:403.00px;font-size:16px;line-height:16px;color:#000;">0.019</span>
<div style="left:338px;top:368px;width:60px;height:54px;background:linear-gradient(90deg,#9f9f96 0.0px,#9f9f96 15.0px,#9a9a99 15.0px,#9a9a99 30.0px,#999999 30.0px,#999999 45.0px,#999999 45.0px,#999999 60.0px);"></div>
<span style="left:342.70px;top:373.00px;font-size:20.8px;line-height:20.8px;color:#000;letter-spacing:-0.571px;">J9s</span>
<span style="left:354.15px;top:403.00px;font-size:16px;line-height:16px;color:#000;">0.011</span>
<div style="left:399px;top:368px;width:60px;height:54px;background:linear-gradient(90deg,#9c9c98 0.0px,#9c9c98 15.0px,#999999 15.0px,#999999 30.0px,#999999 30.0px,#999999 45.0px,#999999 45.0px,#999999 60.0px);"></div>
<span style="left:403.70px;top:373.00px;font-size:20.8px;line-height:20.8px;color:#000;letter-spacing:-0.571px;">J8s</span>
<span style="left:413.96px;top:403.00px;font-size:16px;line-height:16px;color:#000;">0.005</span>
<div style="left:460px;top:368px;width:60px;height:54px;background:#999999;"></div>
<span style="left:464.70px;top:373.00px;font-size:20.8px;line-height:20.8px;color:#000;letter-spacing:-0.571px;">J7s</span>
<span style="left:506.10px;top:403.00px;font-size:16px;line-height:16px;color:#000;">0</span>
<div style="left:521px;top:368px;width:60px;height:54px;background:linear-gradient(90deg,#abab90 0.0px,#abab90 20.0px,#9d9d97 20.0px,#9d9d97 40.0px,#9a9a99 40.0px,#9a9a99 60.0px);"></div>
<span style="left:525.70px;top:373.00px;font-size:20.8px;line-height:20.8px;color:#000;letter-spacing:-0.571px;">J6s</span>
<span style="left:535.96px;top:403.00px;font-size:16px;line-height:16px;color:#000;">0.055</span>
<div style="left:582px;top:368px;width:60px;height:54px;background:#999999;"></div>
<span style="left:586.70px;top:373.00px;font-size:20.8px;line-height:20.8px;color:#000;letter-spacing:-0.571px;">J5s</span>
<span style="left:628.10px;top:403.00px;font-size:16px;line-height:16px;color:#000;">0</span>
<div style="left:643px;top:368px;width:60px;height:54px;background:linear-gradient(90deg,#9f9f96 0.0px,#9f9f96 20.0px,#999999 20.0px,#999999 40.0px,#999999 40.0px,#999999 60.0px);"></div>
<span style="left:647.70px;top:373.00px;font-size:20.8px;line-height:20.8px;color:#000;letter-spacing:-0.571px;">J4s</span>
<span style="left:657.96px;top:403.00px;font-size:16px;line-height:16px;color:#000;">0.016</span>
<div style="left:704px;top:368px;width:60px;height:54px;background:#999999;"></div>
<span style="left:708.70px;top:373.00px;font-size:20.8px;line-height:20.8px;color:#000;letter-spacing:-0.571px;">J3s</span>
<span style="left:750.10px;top:403.00px;font-size:16px;line-height:16px;color:#000;">0</span>
<div style="left:765px;top:368px;width:60px;height:54px;background:#999999;"></div>
<span style="left:769.70px;top:373.00px;font-size:20.8px;line-height:20.8px;color:#000;letter-spacing:-0.571px;">J2s</span>
<span style="left:811.10px;top:403.00px;font-size:16px;line-height:16px;color:#000;">0</span>
<div style="left:33px;top:423px;width:60px;height:54px;background:#999999;"></div>
<span style="left:37.70px;top:428.00px;font-size:20.8px;line-height:20.8px;color:#000;letter-spacing:-0.605px;">ATo</span>
<span style="left:79.10px;top:458.00px;font-size:16px;line-height:16px;color:#000;">0</span>
<div style="left:94px;top:423px;width:60px;height:54px;background:linear-gradient(90deg,#9d9d97 0.0px,#9d9d97 6.67px,#9d9d97 6.67px,#9d9d97 13.33px,#9c9c98 13.33px,#9c9c98 20.0px,#9a9a98 20.0px,#9a9a98 26.67px,#9a9a99 26.67px,#9a9a99 33.33px,#999999 33.33px,#999999 40.0px,#999999 40.0px,#999999 46.67px,#999999 46.67px,#999999 53.33px,#999999 53.33px,#999999 60.0px);"></div>
<span style="left:98.70px;top:428.00px;font-size:20.8px;line-height:20.8px;color:#000;letter-spacing:-0.632px;">KTo</span>
<span style="left:110.15px;top:458.00px;font-size:16px;line-height:16px;color:#000;">0.011</span>
<div style="left:155px;top:423px;width:60px;height:54px;background:#999999;"></div>
<span style="left:159.70px;top:428.00px;font-size:20.8px;line-height:20.8px;color:#000;letter-spacing:-0.672px;">QTo</span>
<span style="left:201.10px;top:458.00px;font-size:16px;line-height:16px;color:#000;">0</span>
<div style="left:216px;top:423px;width:60px;height:54px;background:#999999;"></div>
<span style="left:220.70px;top:428.00px;font-size:20.8px;line-height:20.8px;color:#000;letter-spacing:-0.571px;">JTo</span>
<span style="left:262.10px;top:458.00px;font-size:16px;line-height:16px;color:#000;">0</span>
<div style="left:277px;top:423px;width:60px;height:54px;background:#999999;"></div>
<span style="left:281.70px;top:428.00px;font-size:20.8px;line-height:20.8px;color:#000;letter-spacing:-0.672px;">TT</span>
<span style="left:323.10px;top:458.00px;font-size:16px;line-height:16px;color:#000;">0</span>
<div style="left:338px;top:423px;width:60px;height:54px;background:linear-gradient(90deg,#a1a195 0.0px,#a1a195 15.0px,#999999 15.0px,#999999 30.0px,#999999 30.0px,#999999 45.0px,#999999 45.0px,#999999 60.0px);"></div>
<span style="left:342.70px;top:428.00px;font-size:20.8px;line-height:20.8px;color:#000;letter-spacing:-0.611px;">T9s</span>
<span style="left:352.96px;top:458.00px;font-size:16px;line-height:16px;color:#000;">0.015</span>
<div style="left:399px;top:423px;width:60px;height:54px;background:linear-gradient(90deg,#9d9d97 0.0px,#9d9d97 15.0px,#999999 15.0px,#999999 30.0px,#999999 30.0px,#999999 45.0px,#999999 45.0px,#999999 60.0px);"></div>
<span style="left:403.70px;top:428.00px;font-size:20.8px;line-height:20.8px;color:#000;letter-spacing:-0.611px;">T8s</span>
<span style="left:413.96px;top:458.00px;font-size:16px;line-height:16px;color:#000;">0.008</span>
<div style="left:460px;top:423px;width:60px;height:54px;background:#999999;"></div>
<span style="left:464.70px;top:428.00px;font-size:20.8px;line-height:20.8px;color:#000;letter-spacing:-0.611px;">T7s</span>
<span style="left:506.10px;top:458.00px;font-size:16px;line-height:16px;color:#000;">0</span>
<div style="left:521px;top:423px;width:60px;height:54px;background:linear-gradient(90deg,#a3a394 0.0px,#a3a394 20.0px,#9d9d97 20.0px,#9d9d97 40.0px,#999999 40.0px,#999999 60.0px);"></div>
<span style="left:525.70px;top:428.00px;font-size:20.8px;line-height:20.8px;color:#000;letter-spacing:-0.611px;">T6s</span>
<span style="left:535.96px;top:458.00px;font-size:16px;line-height:16px;color:#000;">0.034</span>
<div style="left:582px;top:423px;width:60px;height:54px;background:#999999;"></div>
<span style="left:586.70px;top:428.00px;font-size:20.8px;line-height:20.8px;color:#000;letter-spacing:-0.611px;">T5s</span>
<span style="left:628.10px;top:458.00px;font-size:16px;line-height:16px;color:#000;">0</span>
<div style="left:643px;top:423px;width:60px;height:54px;background:linear-gradient(90deg,#9c9c97 0.0px,#9c9c97 20.0px,#999999 20.0px,#999999 40.0px,#999999 40.0px,#999999 60.0px);"></div>
<span style="left:647.70px;top:428.00px;font-size:20.8px;line-height:20.8px;color:#000;letter-spacing:-0.611px;">T4s</span>
<span style="left:657.96px;top:458.00px;font-size:16px;line-height:16px;color:#000;">0.008</span>
<div style="left:704px;top:423px;width:60px;height:54px;background:#999999;"></div>
<span style="left:708.70px;top:428.00px;font-size:20.8px;line-height:20.8px;color:#000;letter-spacing:-0.611px;">T3s</span>
<span style="left:750.10px;top:458.00px;font-size:16px;line-height:16px;color:#000;">0</span>
<div style="left:765px;top:423px;width:60px;height:54px;background:#999999;"></div>
<span style="left:769.70px;top:428.00px;font-size:20.8px;line-height:20.8px;color:#000;letter-spacing:-0.611px;">T2s</span>
<span style="left:811.10px;top:458.00px;font-size:16px;line-height:16px;color:#000;">0</span>
<div style="left:33px;top:478px;width:60px;height:54px;background:#999999;"></div>
<span style="left:37.70px;top:483.00px;font-size:20.8px;line-height:20.8px;color:#000;letter-spacing:-0.652px;">A9o</span>
<span style="left:79.10px;top:513.00px;font-size:16px;line-height:16px;color:#000;">0</span>
<div style="left:94px;top:478px;width:60px;height:54px;background:linear-gradient(90deg,#9d9d97 0.0px,#9d9d97 6.67px,#9c9c98 6.67px,#9c9c98 13.33px,#9b9b98 13.33px,#9b9b98 20.0px,#9a9a99 20.0px,#9a9a99 26.67px,#999999 26.67px,#999999 33.33px,#999999 33.33px,#999999 40.0px,#999999 40.0px,#999999 46.67px,#999999 46.67px,#999999 53.33px,#999999 53.33px,#999999 60.0px);"></div>
<span style="left:98.70px;top:483.00px;font-size:20.8px;line-height:20.8px;color:#000;letter-spacing:-0.652px;">K9o</span>
<span style="left:108.96px;top:513.00px;font-size:16px;line-height:16px;color:#000;">0.008</span>
<div style="left:155px;top:478px;width:60px;height:54px;background:#999999;"></div>
<span style="left:159.70px;top:483.00px;font-size:20.8px;line-height:20.8px;color:#000;letter-spacing:-0.693px;">Q9o</span>
<span style="left:201.10px;top:513.00px;font-size:16px;line-height:16px;color:#000;">0</span>
<div style="left:216px;top:478px;width:60px;height:54px;background:#999999;"></div>
<span style="left:220.70px;top:483.00px;font-size:20.8px;line-height:20.8px;color:#000;letter-spacing:-0.591px;">J9o</span>
<span style="left:262.10px;top:513.00px;font-size:16px;line-height:16px;color:#000;">0</span>
<div style="left:277px;top:478px;width:60px;height:54px;background:#999999;"></div>
<span style="left:281.70px;top:483.00px;font-size:20.8px;line-height:20.8px;color:#000;letter-spacing:-0.632px;">T9o</span>
<span style="left:323.10px;top:513.00px;font-size:16px;line-height:16px;color:#000;">0</span>
<div style="left:338px;top:478px;width:60px;height:54px;background:#999999;"></div>
<span style="left:342.70px;top:483.00px;font-size:20.8px;line-height:20.8px;color:#000;letter-spacing:-0.612px;">99</span>
<span style="left:384.10px;top:513.00px;font-size:16px;line-height:16px;color:#000;">0</span>
<div style="left:399px;top:478px;width:60px;height:54px;background:linear-gradient(90deg,#9f9f96 0.0px,#9f9f96 15.0px,#999999 15.0px,#999999 30.0px,#999999 30.0px,#999999 45.0px,#999999 45.0px,#999999 60.0px);"></div>
<span style="left:403.70px;top:483.00px;font-size:20.8px;line-height:20.8px;color:#000;letter-spacing:-0.591px;">98s</span>
<span style="left:422.86px;top:513.00px;font-size:16px;line-height:16px;color:#000;">0.01</span>
<div style="left:460px;top:478px;width:60px;height:54px;background:#999999;"></div>
<span style="left:464.70px;top:483.00px;font-size:20.8px;line-height:20.8px;color:#000;letter-spacing:-0.591px;">97s</span>
<span style="left:506.10px;top:513.00px;font-size:16px;line-height:16px;color:#000;">0</span>
<div style="left:521px;top:478px;width:60px;height:54px;background:linear-gradient(90deg,#9f9f96 0.0px,#9f9f96 20.0px,#9d9d97 20.0px,#9d9d97 40.0px,#999999 40.0px,#999999 60.0px);"></div>
<span style="left:525.70px;top:483.00px;font-size:20.8px;line-height:20.8px;color:#000;letter-spacing:-0.591px;">96s</span>
<span style="left:535.96px;top:513.00px;font-size:16px;line-height:16px;color:#000;">0.025</span>
<div style="left:582px;top:478px;width:60px;height:54px;background:#999999;"></div>
<span style="left:586.70px;top:483.00px;font-size:20.8px;line-height:20.8px;color:#000;letter-spacing:-0.591px;">95s</span>
<span style="left:628.10px;top:513.00px;font-size:16px;line-height:16px;color:#000;">0</span>
<div style="left:643px;top:478px;width:60px;height:54px;background:#999999;"></div>
<span style="left:647.70px;top:483.00px;font-size:20.8px;line-height:20.8px;color:#000;letter-spacing:-0.591px;">94s</span>
<span style="left:689.10px;top:513.00px;font-size:16px;line-height:16px;color:#000;">0</span>
<div style="left:704px;top:478px;width:60px;height:54px;background:#999999;"></div>
<span style="left:708.70px;top:483.00px;font-size:20.8px;line-height:20.8px;color:#000;letter-spacing:-0.591px;">93s</span>
<span style="left:750.10px;top:513.00px;font-size:16px;line-height:16px;color:#000;">0</span>
<div style="left:765px;top:478px;width:60px;height:54px;background:#999999;"></div>
<span style="left:769.70px;top:483.00px;font-size:20.8px;line-height:20.8px;color:#000;letter-spacing:-0.591px;">92s</span>
<span style="left:811.10px;top:513.00px;font-size:16px;line-height:16px;color:#000;">0</span>
<div style="left:33px;top:533px;width:60px;height:54px;background:#999999;"></div>
<span style="left:37.70px;top:538.00px;font-size:20.8px;line-height:20.8px;color:#000;letter-spacing:-0.652px;">A8o</span>
<span style="left:79.10px;top:568.00px;font-size:16px;line-height:16px;color:#000;">0</span>
<div style="left:94px;top:533px;width:60px;height:54px;background:linear-gradient(90deg,#9d9d97 0.0px,#9d9d97 6.67px,#9b9b98 6.67px,#9b9b98 13.33px,#9a9a98 13.33px,#9a9a98 20.0px,#9a9a99 20.0px,#9a9a99 26.67px,#999999 26.67px,#999999 33.33px,#999999 33.33px,#999999 40.0px,#999999 40.0px,#999999 46.67px,#999999 46.67px,#999999 53.33px,#999999 53.33px,#999999 60.0px);"></div>
<span style="left:98.70px;top:538.00px;font-size:20.8px;line-height:20.8px;color:#000;letter-spacing:-0.652px;">K8o</span>
<span style="left:108.96px;top:568.00px;font-size:16px;line-height:16px;color:#000;">0.006</span>
<div style="left:155px;top:533px;width:60px;height:54px;background:#999999;"></div>
<span style="left:159.70px;top:538.00px;font-size:20.8px;line-height:20.8px;color:#000;letter-spacing:-0.693px;">Q8o</span>
<span style="left:201.10px;top:568.00px;font-size:16px;line-height:16px;color:#000;">0</span>
<div style="left:216px;top:533px;width:60px;height:54px;background:#999999;"></div>
<span style="left:220.70px;top:538.00px;font-size:20.8px;line-height:20.8px;color:#000;letter-spacing:-0.591px;">J8o</span>
<span style="left:262.10px;top:568.00px;font-size:16px;line-height:16px;color:#000;">0</span>
<div style="left:277px;top:533px;width:60px;height:54px;background:#999999;"></div>
<span style="left:281.70px;top:538.00px;font-size:20.8px;line-height:20.8px;color:#000;letter-spacing:-0.632px;">T8o</span>
<span style="left:323.10px;top:568.00px;font-size:16px;line-height:16px;color:#000;">0</span>
<div style="left:338px;top:533px;width:60px;height:54px;background:#999999;"></div>
<span style="left:342.70px;top:538.00px;font-size:20.8px;line-height:20.8px;color:#000;letter-spacing:-0.612px;">98o</span>
<span style="left:384.10px;top:568.00px;font-size:16px;line-height:16px;color:#000;">0</span>
<div style="left:399px;top:533px;width:60px;height:54px;background:linear-gradient(90deg,#a4a493 0.0px,#a4a493 10.0px,#9a9a98 10.0px,#9a9a98 20.0px,#999999 20.0px,#999999 30.0px,#999999 30.0px,#999999 40.0px,#999999 40.0px,#999999 50.0px,#999999 50.0px,#999999 60.0px);"></div>
<span style="left:403.70px;top:538.00px;font-size:20.8px;line-height:20.8px;color:#000;letter-spacing:-0.612px;">88</span>
<span style="left:413.96px;top:568.00px;font-size:16px;line-height:16px;color:#000;">0.015</span>
<div style="left:460px;top:533px;width:60px;height:54px;background:#999999;"></div>
<span style="left:464.70px;top:538.00px;font-size:20.8px;line-height:20.8px;color:#000;letter-spacing:-0.591px;">87s</span>
<span style="left:506.10px;top:568.00px;font-size:16px;line-height:16px;color:#000;">0</span>
<div style="left:521px;top:533px;width:60px;height:54px;background:linear-gradient(90deg,#9d9d97 0.0px,#9d9d97 20.0px,#999999 20.0px,#999999 40.0px,#999999 40.0px,#999999 60.0px);"></div>
<span style="left:525.70px;top:538.00px;font-size:20.8px;line-height:20.8px;color:#000;letter-spacing:-0.591px;">86s</span>
<span style="left:537.15px;top:568.00px;font-size:16px;line-height:16px;color:#000;">0.011</span>
<div style="left:582px;top:533px;width:60px;height:54px;background:#999999;"></div>
<span style="left:586.70px;top:538.00px;font-size:20.8px;line-height:20.8px;color:#000;letter-spacing:-0.591px;">85s</span>
<span style="left:628.10px;top:568.00px;font-size:16px;line-height:16px;color:#000;">0</span>
<div style="left:643px;top:533px;width:60px;height:54px;background:linear-gradient(90deg,#9d9d97 0.0px,#9d9d97 20.0px,#999999 20.0px,#999999 40.0px,#999999 40.0px,#999999 60.0px);"></div>
<span style="left:647.70px;top:538.00px;font-size:20.8px;line-height:20.8px;color:#000;letter-spacing:-0.591px;">84s</span>
<span style="left:659.15px;top:568.00px;font-size:16px;line-height:16px;color:#000;">0.011</span>
<div style="left:704px;top:533px;width:60px;height:54px;background:#999999;"></div>
<span style="left:708.70px;top:538.00px;font-size:20.8px;line-height:20.8px;color:#000;letter-spacing:-0.591px;">83s</span>
<span style="left:750.10px;top:568.00px;font-size:16px;line-height:16px;color:#000;">0</span>
<div style="left:765px;top:533px;width:60px;height:54px;background:#999999;"></div>
<span style="left:769.70px;top:538.00px;font-size:20.8px;line-height:20.8px;color:#000;letter-spacing:-0.591px;">82s</span>
<span style="left:811.10px;top:568.00px;font-size:16px;line-height:16px;color:#000;">0</span>
<div style="left:33px;top:588px;width:60px;height:54px;background:#999999;"></div>
<span style="left:37.70px;top:593.00px;font-size:20.8px;line-height:20.8px;color:#000;letter-spacing:-0.652px;">A7o</span>
<span style="left:47.96px;top:623.00px;font-size:16px;line-height:16px;color:#000;">0.001</span>
<div style="left:94px;top:588px;width:60px;height:54px;background:#999999;"></div>
<span style="left:98.70px;top:593.00px;font-size:20.8px;line-height:20.8px;color:#000;letter-spacing:-0.652px;">K7o</span>
<span style="left:140.10px;top:623.00px;font-size:16px;line-height:16px;color:#000;">0</span>
<div style="left:155px;top:588px;width:60px;height:54px;background:#999999;"></div>
<span style="left:159.70px;top:593.00px;font-size:20.8px;line-height:20.8px;color:#000;letter-spacing:-0.693px;">Q7o</span>
<span style="left:201.10px;top:623.00px;font-size:16px;line-height:16px;color:#000;">0</span>
<div style="left:216px;top:588px;width:60px;height:54px;background:#999999;"></div>
<span style="left:220.70px;top:593.00px;font-size:20.8px;line-height:20.8px;color:#000;letter-spacing:-0.591px;">J7o</span>
<span style="left:262.10px;top:623.00px;font-size:16px;line-height:16px;color:#000;">0</span>
<div style="left:277px;top:588px;width:60px;height:54px;background:#999999;"></div>
<span style="left:281.70px;top:593.00px;font-size:20.8px;line-height:20.8px;color:#000;letter-spacing:-0.632px;">T7o</span>
<span style="left:323.10px;top:623.00px;font-size:16px;line-height:16px;color:#000;">0</span>
<div style="left:338px;top:588px;width:60px;height:54px;background:#999999;"></div>
<span style="left:342.70px;top:593.00px;font-size:20.8px;line-height:20.8px;color:#000;letter-spacing:-0.612px;">97o</span>
<span style="left:384.10px;top:623.00px;font-size:16px;line-height:16px;color:#000;">0</span>
<div style="left:399px;top:588px;width:60px;height:54px;background:#999999;"></div>
<span style="left:403.70px;top:593.00px;font-size:20.8px;line-height:20.8px;color:#000;letter-spacing:-0.612px;">87o</span>
<span style="left:445.10px;top:623.00px;font-size:16px;line-height:16px;color:#000;">0</span>
<div style="left:460px;top:588px;width:60px;height:54px;background:linear-gradient(90deg,#acac8f 0.0px,#acac8f 10.0px,#a3a394 10.0px,#a3a394 20.0px,#9f9f96 20.0px,#9f9f96 30.0px,#9a9a99 30.0px,#9a9a99 40.0px,#999999 40.0px,#999999 50.0px,#999999 50.0px,#999999 60.0px);"></div>
<span style="left:464.70px;top:593.00px;font-size:20.8px;line-height:20.8px;color:#000;letter-spacing:-0.612px;">77</span>
<span style="left:474.96px;top:623.00px;font-size:16px;line-height:16px;color:#000;">0.043</span>
<div style="left:521px;top:588px;width:60px;height:54px;background:linear-gradient(90deg,#b9b986 0.0px,#b9b986 20.0px,#a7a792 20.0px,#a7a792 40.0px,#9b9b98 40.0px,#9b9b98 60.0px);"></div>
<span style="left:525.70px;top:593.00px;font-size:20.8px;line-height:20.8px;color:#000;letter-spacing:-0.591px;">76s</span>
<span style="left:535.96px;top:623.00px;font-size:16px;line-height:16px;color:#000;">0.121</span>
<div style="left:582px;top:588px;width:60px;height:54px;background:#999999;"></div>
<span style="left:586.70px;top:593.00px;font-size:20.8px;line-height:20.8px;color:#000;letter-spacing:-0.591px;">75s</span>
<span style="left:628.10px;top:623.00px;font-size:16px;line-height:16px;color:#000;">0</span>
<div style="left:643px;top:588px;width:60px;height:54px;background:#999999;"></div>
<span style="left:647.70px;top:593.00px;font-size:20.8px;line-height:20.8px;color:#000;letter-spacing:-0.591px;">74s</span>
<span style="left:689.10px;top:623.00px;font-size:16px;line-height:16px;color:#000;">0</span>
<div style="left:704px;top:588px;width:60px;height:54px;background:#999999;"></div>
<span style="left:708.70px;top:593.00px;font-size:20.8px;line-height:20.8px;color:#000;letter-spacing:-0.591px;">73s</span>
<span style="left:750.10px;top:623.00px;font-size:16px;line-height:16px;color:#000;">0</span>
<div style="left:765px;top:588px;width:60px;height:54px;background:#999999;"></div>
<span style="left:769.70px;top:593.00px;font-size:20.8px;line-height:20.8px;color:#000;letter-spacing:-0.591px;">72s</span>
<span style="left:811.10px;top:623.00px;font-size:16px;line-height:16px;color:#000;">0</span>
<div style="left:33px;top:643px;width:60px;height:54px;background:linear-gradient(90deg,#e4e45b 0.0px,#e4e45b 6.67px,#e3e35c 6.67px,#e3e35c 13.33px,#a5a593 13.33px,#a5a593 20.0px,#a5a593 20.0px,#a5a593 26.67px,#a4a493 26.67px,#a4a493 33.33px,#9b9b98 33.33px,#9b9b98 40.0px,#9a9a99 40.0px,#9a9a99 46.67px,#9a9a99 46.67px,#9a9a99 53.33px,#999999 53.33px,#999999 60.0px);"></div>
<span style="left:37.70px;top:648.00px;font-size:20.8px;line-height:20.8px;color:#000;letter-spacing:-0.652px;">A6o</span>
<span style="left:47.96px;top:678.00px;font-size:16px;line-height:16px;color:#000;">0.181</span>
<div style="left:94px;top:643px;width:60px;height:54px;background:#999999;"></div>
<span style="left:98.70px;top:648.00px;font-size:20.8px;line-height:20.8px;color:#000;letter-spacing:-0.652px;">K6o</span>
<span style="left:140.10px;top:678.00px;font-size:16px;line-height:16px;color:#000;">0</span>
<div style="left:155px;top:643px;width:60px;height:54px;background:#999999;"></div>
<span style="left:159.70px;top:648.00px;font-size:20.8px;line-height:20.8px;color:#000;letter-spacing:-0.693px;">Q6o</span>
<span style="left:201.10px;top:678.00px;font-size:16px;line-height:16px;color:#000;">0</span>
<div style="left:216px;top:643px;width:60px;height:54px;background:#999999;"></div>
<span style="left:220.70px;top:648.00px;font-size:20.8px;line-height:20.8px;color:#000;letter-spacing:-0.591px;">J6o</span>
<span style="left:262.10px;top:678.00px;font-size:16px;line-height:16px;color:#000;">0</span>
<div style="left:277px;top:643px;width:60px;height:54px;background:#999999;"></div>
<span style="left:281.70px;top:648.00px;font-size:20.8px;line-height:20.8px;color:#000;letter-spacing:-0.632px;">T6o</span>
<span style="left:323.10px;top:678.00px;font-size:16px;line-height:16px;color:#000;">0</span>
<div style="left:338px;top:643px;width:60px;height:54px;background:#999999;"></div>
<span style="left:342.70px;top:648.00px;font-size:20.8px;line-height:20.8px;color:#000;letter-spacing:-0.612px;">96o</span>
<span style="left:384.10px;top:678.00px;font-size:16px;line-height:16px;color:#000;">0</span>
<div style="left:399px;top:643px;width:60px;height:54px;background:#999999;"></div>
<span style="left:403.70px;top:648.00px;font-size:20.8px;line-height:20.8px;color:#000;letter-spacing:-0.612px;">86o</span>
<span style="left:445.10px;top:678.00px;font-size:16px;line-height:16px;color:#000;">0</span>
<div style="left:460px;top:643px;width:60px;height:54px;background:#999999;"></div>
<span style="left:464.70px;top:648.00px;font-size:20.8px;line-height:20.8px;color:#000;letter-spacing:-0.612px;">76o</span>
<span style="left:506.10px;top:678.00px;font-size:16px;line-height:16px;color:#000;">0</span>
<div style="left:521px;top:643px;width:60px;height:54px;background:linear-gradient(90deg,#9f9f96 0.0px,#9f9f96 20.0px,#9d9d97 20.0px,#9d9d97 40.0px,#9a9a99 40.0px,#9a9a99 60.0px);"></div>
<span style="left:525.70px;top:648.00px;font-size:20.8px;line-height:20.8px;color:#000;letter-spacing:-0.612px;">66</span>
<span style="left:535.96px;top:678.00px;font-size:16px;line-height:16px;color:#000;">0.024</span>
<div style="left:582px;top:643px;width:60px;height:54px;background:linear-gradient(90deg,#a4a493 0.0px,#a4a493 20.0px,#a0a095 20.0px,#a0a095 40.0px,#9a9a98 40.0px,#9a9a98 60.0px);"></div>
<span style="left:586.70px;top:648.00px;font-size:20.8px;line-height:20.8px;color:#000;letter-spacing:-0.591px;">65s</span>
<span style="left:596.96px;top:678.00px;font-size:16px;line-height:16px;color:#000;">0.046</span>
<div style="left:643px;top:643px;width:60px;height:54px;background:#999999;"></div>
<span style="left:647.70px;top:648.00px;font-size:20.8px;line-height:20.8px;color:#000;letter-spacing:-0.591px;">64s</span>
<span style="left:689.10px;top:678.00px;font-size:16px;line-height:16px;color:#000;">0</span>
<div style="left:704px;top:643px;width:60px;height:54px;background:#999999;"></div>
<span style="left:708.70px;top:648.00px;font-size:20.8px;line-height:20.8px;color:#000;letter-spacing:-0.591px;">63s</span>
<span style="left:750.10px;top:678.00px;font-size:16px;line-height:16px;color:#000;">0</span>
<div style="left:765px;top:643px;width:60px;height:54px;background:#999999;"></div>
<span style="left:769.70px;top:648.00px;font-size:20.8px;line-height:20.8px;color:#000;letter-spacing:-0.591px;">62s</span>
<span style="left:811.10px;top:678.00px;font-size:16px;line-height:16px;color:#000;">0</span>
<div style="left:33px;top:698px;width:60px;height:54px;background:linear-gradient(90deg,#b1b18c 0.0px,#b1b18c 5.0px,#a5a593 5.0px,#a5a593 10.0px,#a0a095 10.0px,#a0a095 15.0px,#9d9d97 15.0px,#9d9d97 20.0px,#9c9c98 20.0px,#9c9c98 25.0px,#9a9a98 25.0px,#9a9a98 30.0px,#9a9a99 30.0px,#9a9a99 35.0px,#999999 35.0px,#999999 40.0px,#999999 40.0px,#999999 45.0px,#999999 45.0px,#999999 50.0px,#999999 50.0px,#999999 55.0px,#999999 55.0px,#999999 60.0px);"></div>
<span style="left:37.70px;top:703.00px;font-size:20.8px;line-height:20.8px;color:#000;letter-spacing:-0.652px;">A5o</span>
<span style="left:47.96px;top:733.00px;font-size:16px;line-height:16px;color:#000;">0.033</span>
<div style="left:94px;top:698px;width:60px;height:54px;background:#999999;"></div>
<span style="left:98.70px;top:703.00px;font-size:20.8px;line-height:20.8px;color:#000;letter-spacing:-0.652px;">K5o</span>
<span style="left:140.10px;top:733.00px;font-size:16px;line-height:16px;color:#000;">0</span>
<div style="left:155px;top:698px;width:60px;height:54px;background:#999999;"></div>
<span style="left:159.70px;top:703.00px;font-size:20.8px;line-height:20.8px;color:#000;letter-spacing:-0.693px;">Q5o</span>
<span style="left:201.10px;top:733.00px;font-size:16px;line-height:16px;color:#000;">0</span>
<div style="left:216px;top:698px;width:60px;height:54px;background:#999999;"></div>
<span style="left:220.70px;top:703.00px;font-size:20.8px;line-height:20.8px;color:#000;letter-spacing:-0.591px;">J5o</span>
<span style="left:262.10px;top:733.00px;font-size:16px;line-height:16px;color:#000;">0</span>
<div style="left:277px;top:698px;width:60px;height:54px;background:#999999;"></div>
<span style="left:281.70px;top:703.00px;font-size:20.8px;line-height:20.8px;color:#000;letter-spacing:-0.632px;">T5o</span>
<span style="left:323.10px;top:733.00px;font-size:16px;line-height:16px;color:#000;">0</span>
<div style="left:338px;top:698px;width:60px;height:54px;background:#999999;"></div>
<span style="left:342.70px;top:703.00px;font-size:20.8px;line-height:20.8px;color:#000;letter-spacing:-0.612px;">95o</span>
<span style="left:384.10px;top:733.00px;font-size:16px;line-height:16px;color:#000;">0</span>
<div style="left:399px;top:698px;width:60px;height:54px;background:#999999;"></div>
<span style="left:403.70px;top:703.00px;font-size:20.8px;line-height:20.8px;color:#000;letter-spacing:-0.612px;">85o</span>
<span style="left:445.10px;top:733.00px;font-size:16px;line-height:16px;color:#000;">0</span>
<div style="left:460px;top:698px;width:60px;height:54px;background:#999999;"></div>
<span style="left:464.70px;top:703.00px;font-size:20.8px;line-height:20.8px;color:#000;letter-spacing:-0.612px;">75o</span>
<span style="left:506.10px;top:733.00px;font-size:16px;line-height:16px;color:#000;">0</span>
<div style="left:521px;top:698px;width:60px;height:54px;background:#999999;"></div>
<span style="left:525.70px;top:703.00px;font-size:20.8px;line-height:20.8px;color:#000;letter-spacing:-0.612px;">65o</span>
<span style="left:567.10px;top:733.00px;font-size:16px;line-height:16px;color:#000;">0</span>
<div style="left:582px;top:698px;width:60px;height:54px;background:linear-gradient(90deg,#a5a593 0.0px,#a5a593 10.0px,#a3a394 10.0px,#a3a394 20.0px,#a1a195 20.0px,#a1a195 30.0px,#9a9a99 30.0px,#9a9a99 40.0px,#999999 40.0px,#999999 50.0px,#999999 50.0px,#999999 60.0px);"></div>
<span style="left:586.70px;top:703.00px;font-size:20.8px;line-height:20.8px;color:#000;letter-spacing:-0.612px;">55</span>
<span style="left:596.96px;top:733.00px;font-size:16px;line-height:16px;color:#000;">0.039</span>
<div style="left:643px;top:698px;width:60px;height:54px;background:#999999;"></div>
<span style="left:647.70px;top:703.00px;font-size:20.8px;line-height:20.8px;color:#000;letter-spacing:-0.591px;">54s</span>
<span style="left:689.10px;top:733.00px;font-size:16px;line-height:16px;color:#000;">0</span>
<div style="left:704px;top:698px;width:60px;height:54px;background:#999999;"></div>
<span style="left:708.70px;top:703.00px;font-size:20.8px;line-height:20.8px;color:#000;letter-spacing:-0.591px;">53s</span>
<span style="left:718.96px;top:733.00px;font-size:16px;line-height:16px;color:#000;">0.001</span>
<div style="left:765px;top:698px;width:60px;height:54px;background:#999999;"></div>
<span style="left:769.70px;top:703.00px;font-size:20.8px;line-height:20.8px;color:#000;letter-spacing:-0.591px;">52s</span>
<span style="left:811.10px;top:733.00px;font-size:16px;line-height:16px;color:#000;">0</span>
<div style="left:33px;top:753px;width:60px;height:54px;background:#999999;"></div>
<span style="left:37.70px;top:758.00px;font-size:20.8px;line-height:20.8px;color:#000;letter-spacing:-0.652px;">A4o</span>
<span style="left:47.96px;top:788.00px;font-size:16px;line-height:16px;color:#000;">0.002</span>
<div style="left:94px;top:753px;width:60px;height:54px;background:#999999;"></div>
<span style="left:98.70px;top:758.00px;font-size:20.8px;line-height:20.8px;color:#000;letter-spacing:-0.652px;">K4o</span>
<span style="left:140.10px;top:788.00px;font-size:16px;line-height:16px;color:#000;">0</span>
<div style="left:155px;top:753px;width:60px;height:54px;background:#999999;"></div>
<span style="left:159.70px;top:758.00px;font-size:20.8px;line-height:20.8px;color:#000;letter-spacing:-0.693px;">Q4o</span>
<span style="left:201.10px;top:788.00px;font-size:16px;line-height:16px;color:#000;">0</span>
<div style="left:216px;top:753px;width:60px;height:54px;background:#999999;"></div>
<span style="left:220.70px;top:758.00px;font-size:20.8px;line-height:20.8px;color:#000;letter-spacing:-0.591px;">J4o</span>
<span style="left:262.10px;top:788.00px;font-size:16px;line-height:16px;color:#000;">0</span>
<div style="left:277px;top:753px;width:60px;height:54px;background:#999999;"></div>
<span style="left:281.70px;top:758.00px;font-size:20.8px;line-height:20.8px;color:#000;letter-spacing:-0.632px;">T4o</span>
<span style="left:323.10px;top:788.00px;font-size:16px;line-height:16px;color:#000;">0</span>
<div style="left:338px;top:753px;width:60px;height:54px;background:#999999;"></div>
<span style="left:342.70px;top:758.00px;font-size:20.8px;line-height:20.8px;color:#000;letter-spacing:-0.612px;">94o</span>
<span style="left:384.10px;top:788.00px;font-size:16px;line-height:16px;color:#000;">0</span>
<div style="left:399px;top:753px;width:60px;height:54px;background:#999999;"></div>
<span style="left:403.70px;top:758.00px;font-size:20.8px;line-height:20.8px;color:#000;letter-spacing:-0.612px;">84o</span>
<span style="left:445.10px;top:788.00px;font-size:16px;line-height:16px;color:#000;">0</span>
<div style="left:460px;top:753px;width:60px;height:54px;background:#999999;"></div>
<span style="left:464.70px;top:758.00px;font-size:20.8px;line-height:20.8px;color:#000;letter-spacing:-0.612px;">74o</span>
<span style="left:506.10px;top:788.00px;font-size:16px;line-height:16px;color:#000;">0</span>
<div style="left:521px;top:753px;width:60px;height:54px;background:#999999;"></div>
<span style="left:525.70px;top:758.00px;font-size:20.8px;line-height:20.8px;color:#000;letter-spacing:-0.612px;">64o</span>
<span style="left:567.10px;top:788.00px;font-size:16px;line-height:16px;color:#000;">0</span>
<div style="left:582px;top:753px;width:60px;height:54px;background:#999999;"></div>
<span style="left:586.70px;top:758.00px;font-size:20.8px;line-height:20.8px;color:#000;letter-spacing:-0.612px;">54o</span>
<span style="left:628.10px;top:788.00px;font-size:16px;line-height:16px;color:#000;">0</span>
<div style="left:643px;top:753px;width:60px;height:54px;background:linear-gradient(90deg,#9d9d97 0.0px,#9d9d97 20.0px,#9b9b98 20.0px,#9b9b98 40.0px,#999999 40.0px,#999999 60.0px);"></div>
<span style="left:647.70px;top:758.00px;font-size:20.8px;line-height:20.8px;color:#000;letter-spacing:-0.612px;">44</span>
<span style="left:657.96px;top:788.00px;font-size:16px;line-height:16px;color:#000;">0.015</span>
<div style="left:704px;top:753px;width:60px;height:54px;background:#999999;"></div>
<span style="left:708.70px;top:758.00px;font-size:20.8px;line-height:20.8px;color:#000;letter-spacing:-0.591px;">43s</span>
<span style="left:718.96px;top:788.00px;font-size:16px;line-height:16px;color:#000;">0.001</span>
<div style="left:765px;top:753px;width:60px;height:54px;background:#999999;"></div>
<span style="left:769.70px;top:758.00px;font-size:20.8px;line-height:20.8px;color:#000;letter-spacing:-0.591px;">42s</span>
<span style="left:811.10px;top:788.00px;font-size:16px;line-height:16px;color:#000;">0</span>
<div style="left:33px;top:808px;width:60px;height:54px;background:#999999;"></div>
<span style="left:37.70px;top:813.00px;font-size:20.8px;line-height:20.8px;color:#000;letter-spacing:-0.652px;">A3o</span>
<span style="left:79.10px;top:843.00px;font-size:16px;line-height:16px;color:#000;">0</span>
<div style="left:94px;top:808px;width:60px;height:54px;background:#999999;"></div>
<span style="left:98.70px;top:813.00px;font-size:20.8px;line-height:20.8px;color:#000;letter-spacing:-0.652px;">K3o</span>
<span style="left:140.10px;top:843.00px;font-size:16px;line-height:16px;color:#000;">0</span>
<div style="left:155px;top:808px;width:60px;height:54px;background:#999999;"></div>
<span style="left:159.70px;top:813.00px;font-size:20.8px;line-height:20.8px;color:#000;letter-spacing:-0.693px;">Q3o</span>
<span style="left:201.10px;top:843.00px;font-size:16px;line-height:16px;color:#000;">0</span>
<div style="left:216px;top:808px;width:60px;height:54px;background:#999999;"></div>
<span style="left:220.70px;top:813.00px;font-size:20.8px;line-height:20.8px;color:#000;letter-spacing:-0.591px;">J3o</span>
<span style="left:262.10px;top:843.00px;font-size:16px;line-height:16px;color:#000;">0</span>
<div style="left:277px;top:808px;width:60px;height:54px;background:#999999;"></div>
<span style="left:281.70px;top:813.00px;font-size:20.8px;line-height:20.8px;color:#000;letter-spacing:-0.632px;">T3o</span>
<span style="left:323.10px;top:843.00px;font-size:16px;line-height:16px;color:#000;">0</span>
<div style="left:338px;top:808px;width:60px;height:54px;background:#999999;"></div>
<span style="left:342.70px;top:813.00px;font-size:20.8px;line-height:20.8px;color:#000;letter-spacing:-0.612px;">93o</span>
<span style="left:384.10px;top:843.00px;font-size:16px;line-height:16px;color:#000;">0</span>
<div style="left:399px;top:808px;width:60px;height:54px;background:#999999;"></div>
<span style="left:403.70px;top:813.00px;font-size:20.8px;line-height:20.8px;color:#000;letter-spacing:-0.612px;">83o</span>
<span style="left:445.10px;top:843.00px;font-size:16px;line-height:16px;color:#000;">0</span>
<div style="left:460px;top:808px;width:60px;height:54px;background:#999999;"></div>
<span style="left:464.70px;top:813.00px;font-size:20.8px;line-height:20.8px;color:#000;letter-spacing:-0.612px;">73o</span>
<span style="left:506.10px;top:843.00px;font-size:16px;line-height:16px;color:#000;">0</span>
<div style="left:521px;top:808px;width:60px;height:54px;background:#999999;"></div>
<span style="left:525.70px;top:813.00px;font-size:20.8px;line-height:20.8px;color:#000;letter-spacing:-0.612px;">63o</span>
<span style="left:567.10px;top:843.00px;font-size:16px;line-height:16px;color:#000;">0</span>
<div style="left:582px;top:808px;width:60px;height:54px;background:#999999;"></div>
<span style="left:586.70px;top:813.00px;font-size:20.8px;line-height:20.8px;color:#000;letter-spacing:-0.612px;">53o</span>
<span style="left:628.10px;top:843.00px;font-size:16px;line-height:16px;color:#000;">0</span>
<div style="left:643px;top:808px;width:60px;height:54px;background:#999999;"></div>
<span style="left:647.70px;top:813.00px;font-size:20.8px;line-height:20.8px;color:#000;letter-spacing:-0.612px;">43o</span>
<span style="left:689.10px;top:843.00px;font-size:16px;line-height:16px;color:#000;">0</span>
<div style="left:704px;top:808px;width:60px;height:54px;background:#999999;"></div>
<span style="left:708.70px;top:813.00px;font-size:20.8px;line-height:20.8px;color:#000;letter-spacing:-0.612px;">33</span>
<span style="left:718.96px;top:843.00px;font-size:16px;line-height:16px;color:#000;">0.002</span>
<div style="left:765px;top:808px;width:60px;height:54px;background:#999999;"></div>
<span style="left:769.70px;top:813.00px;font-size:20.8px;line-height:20.8px;color:#000;letter-spacing:-0.591px;">32s</span>
<span style="left:811.10px;top:843.00px;font-size:16px;line-height:16px;color:#000;">0</span>
<div style="left:33px;top:863px;width:60px;height:54px;background:#999999;"></div>
<span style="left:37.70px;top:868.00px;font-size:20.8px;line-height:20.8px;color:#000;letter-spacing:-0.652px;">A2o</span>
<span style="left:47.96px;top:898.00px;font-size:16px;line-height:16px;color:#000;">0.001</span>
<div style="left:94px;top:863px;width:60px;height:54px;background:#999999;"></div>
<span style="left:98.70px;top:868.00px;font-size:20.8px;line-height:20.8px;color:#000;letter-spacing:-0.652px;">K2o</span>
<span style="left:140.10px;top:898.00px;font-size:16px;line-height:16px;color:#000;">0</span>
<div style="left:155px;top:863px;width:60px;height:54px;background:#999999;"></div>
<span style="left:159.70px;top:868.00px;font-size:20.8px;line-height:20.8px;color:#000;letter-spacing:-0.693px;">Q2o</span>
<span style="left:201.10px;top:898.00px;font-size:16px;line-height:16px;color:#000;">0</span>
<div style="left:216px;top:863px;width:60px;height:54px;background:#999999;"></div>
<span style="left:220.70px;top:868.00px;font-size:20.8px;line-height:20.8px;color:#000;letter-spacing:-0.591px;">J2o</span>
<span style="left:262.10px;top:898.00px;font-size:16px;line-height:16px;color:#000;">0</span>
<div style="left:277px;top:863px;width:60px;height:54px;background:#999999;"></div>
<span style="left:281.70px;top:868.00px;font-size:20.8px;line-height:20.8px;color:#000;letter-spacing:-0.632px;">T2o</span>
<span style="left:323.10px;top:898.00px;font-size:16px;line-height:16px;color:#000;">0</span>
<div style="left:338px;top:863px;width:60px;height:54px;background:#999999;"></div>
<span style="left:342.70px;top:868.00px;font-size:20.8px;line-height:20.8px;color:#000;letter-spacing:-0.612px;">92o</span>
<span style="left:384.10px;top:898.00px;font-size:16px;line-height:16px;color:#000;">0</span>
<div style="left:399px;top:863px;width:60px;height:54px;background:#999999;"></div>
<span style="left:403.70px;top:868.00px;font-size:20.8px;line-height:20.8px;color:#000;letter-spacing:-0.612px;">82o</span>
<span style="left:445.10px;top:898.00px;font-size:16px;line-height:16px;color:#000;">0</span>
<div style="left:460px;top:863px;width:60px;height:54px;background:#999999;"></div>
<span style="left:464.70px;top:868.00px;font-size:20.8px;line-height:20.8px;color:#000;letter-spacing:-0.612px;">72o</span>
<span style="left:506.10px;top:898.00px;font-size:16px;line-height:16px;color:#000;">0</span>
<div style="left:521px;top:863px;width:60px;height:54px;background:#999999;"></div>
<span style="left:525.70px;top:868.00px;font-size:20.8px;line-height:20.8px;color:#000;letter-spacing:-0.612px;">62o</span>
<span style="left:567.10px;top:898.00px;font-size:16px;line-height:16px;color:#000;">0</span>
<div style="left:582px;top:863px;width:60px;height:54px;background:#999999;"></div>
<span style="left:586.70px;top:868.00px;font-size:20.8px;line-height:20.8px;color:#000;letter-spacing:-0.612px;">52o</span>
<span style="left:628.10px;top:898.00px;font-size:16px;line-height:16px;color:#000;">0</span>
<div style="left:643px;top:863px;width:60px;height:54px;background:#999999;"></div>
<span style="left:647.70px;top:868.00px;font-size:20.8px;line-height:20.8px;color:#000;letter-spacing:-0.612px;">42o</span>
<span style="left:689.10px;top:898.00px;font-size:16px;line-height:16px;color:#000;">0</span>
<div style="left:704px;top:863px;width:60px;height:54px;background:#999999;"></div>
<span style="left:708.70px;top:868.00px;font-size:20.8px;line-height:20.8px;color:#000;letter-spacing:-0.612px;">32o</span>
<span style="left:750.10px;top:898.00px;font-size:16px;line-height:16px;color:#000;">0</span>
<div style="left:765px;top:863px;width:60px;height:54px;background:#999999;"></div>
<span style="left:769.70px;top:868.00px;font-size:20.8px;line-height:20.8px;color:#000;letter-spacing:-0.612px;">22</span>
<span style="left:811.10px;top:898.00px;font-size:16px;line-height:16px;color:#000;">0</span>
<div style="left:836px;top:197px;width:690px;height:726px;background:#fff;"></div>
<div style="left:836px;top:197px;width:689px;height:725px;background:#a0a0a0;"></div>
<div style="left:837px;top:198px;width:688px;height:724px;background:#e3e3e3;"></div>
<div style="left:837px;top:198px;width:687px;height:723px;background:#696969;"></div>
<div style="left:838px;top:199px;width:686px;height:722px;background:#f0f0f0;"></div>
<div style="left:850px;top:203px;width:322px;height:61px;background:#e9967a;"></div>
<div style="left:1190px;top:203px;width:322px;height:61px;background:#8fbc8b;"></div>
<span style="left:974.01px;top:206.00px;font-size:16.7px;line-height:16.7px;color:#000;">BET 8403</span>
<span style="left:967.83px;top:226.00px;font-size:16.7px;line-height:16.7px;color:#000;">0.3 combos</span>
<span style="left:985.00px;top:245.00px;font-size:16.7px;line-height:16.7px;color:#000;">4.80 %</span>
<span style="left:1321.77px;top:206.00px;font-size:16.7px;line-height:16.7px;color:#000;">CHECK</span>
<span style="left:1307.83px;top:226.00px;font-size:16.7px;line-height:16.7px;color:#000;">5.7 combos</span>
<span style="left:1320.36px;top:245.00px;font-size:16.7px;line-height:16.7px;color:#000;">95.20 %</span>
<div style="left:841px;top:266px;width:680px;height:28px;background:#8fbc8b;"></div>
<div style="left:841px;top:266px;width:33px;height:28px;background:#e9967a;"></div>
<span style="left:843.09px;top:303.00px;font-size:26.0px;line-height:26.0px;color:#14a52d;transform:scaleX(0.971);transform-origin:0 0;font-family:'DejaVu Sans',sans-serif;">♣</span>
<span style="left:869.01px;top:302.00px;font-size:27.5px;line-height:27.5px;color:#2a38c3;transform:scaleX(1.059);transform-origin:0 0;font-family:'DejaVu Sans',sans-serif;">♦</span>
<span style="left:900.80px;top:303.00px;font-size:25.5px;line-height:25.5px;color:#fa0032;transform:scaleX(0.927);transform-origin:0 0;font-family:'DejaVu Sans',sans-serif;">♥</span>
<span style="left:926.24px;top:302.00px;font-size:27.5px;line-height:27.5px;color:#000;transform:scaleX(1.027);transform-origin:0 0;font-family:'DejaVu Sans',sans-serif;">♠</span>
<span style="left:843.09px;top:348.00px;font-size:26.0px;line-height:26.0px;color:#14a52d;transform:scaleX(0.971);transform-origin:0 0;font-family:'DejaVu Sans',sans-serif;">♣</span>
<span style="left:869.01px;top:347.00px;font-size:27.5px;line-height:27.5px;color:#2a38c3;transform:scaleX(1.059);transform-origin:0 0;font-family:'DejaVu Sans',sans-serif;">♦</span>
<span style="left:900.80px;top:348.00px;font-size:25.5px;line-height:25.5px;color:#fa0032;transform:scaleX(0.927);transform-origin:0 0;font-family:'DejaVu Sans',sans-serif;">♥</span>
<span style="left:926.24px;top:347.00px;font-size:27.5px;line-height:27.5px;color:#000;transform:scaleX(1.027);transform-origin:0 0;font-family:'DejaVu Sans',sans-serif;">♠</span>
<span style="left:1083.60px;top:328.00px;font-size:16px;line-height:16px;color:#000;">6.0 combos</span>
<span style="left:1083.60px;top:345.00px;font-size:16px;line-height:16px;color:#000;">0.56 %</span>
<span style="left:1185.00px;top:299.00px;font-size:11px;line-height:11px;color:#000;letter-spacing:-0.133px;">Clone:</span>
<span style="left:1246.00px;top:299.00px;font-size:11px;line-height:11px;color:#000;letter-spacing:-0.079px;">Range:</span>
<span style="left:1303.00px;top:299.00px;font-size:11px;line-height:11px;color:#000;letter-spacing:-0.233px;">Equity:</span>
<span style="left:1362.00px;top:299.00px;font-size:11px;line-height:11px;color:#000;letter-spacing:-0.107px;">EV:</span>
<div style="left:1177px;top:327px;width:52px;height:26px;background:#e1e1e1;border:1px solid #adadad;box-sizing:border-box"></div>
<span style="left:1195.09px;top:336.00px;font-size:11px;line-height:11px;color:#000;letter-spacing:-0.211px;">full</span>
<div style="left:1177px;top:355px;width:52px;height:26px;background:#e1e1e1;border:1px solid #adadad;box-sizing:border-box"></div>
<span style="left:1189.06px;top:364.00px;font-size:11px;line-height:11px;color:#000;letter-spacing:-0.403px;">zoom</span>
<div style="left:1237px;top:327px;width:51px;height:26px;background:#e1e1e1;border:1px solid #adadad;box-sizing:border-box"></div>
<span style="left:1249.71px;top:336.00px;font-size:11px;line-height:11px;color:#000;letter-spacing:-0.489px;">OOP</span>
<div style="left:1237px;top:355px;width:51px;height:26px;background:#e1e1e1;border:1px solid #adadad;box-sizing:border-box"></div>
<span style="left:1256.32px;top:364.00px;font-size:11px;line-height:11px;color:#000;letter-spacing:-0.312px;">IP</span>
<div style="left:1296px;top:327px;width:51px;height:26px;background:#e1e1e1;border:1px solid #adadad;box-sizing:border-box"></div>
<span style="left:1308.71px;top:336.00px;font-size:11px;line-height:11px;color:#000;letter-spacing:-0.489px;">OOP</span>
<div style="left:1296px;top:355px;width:51px;height:26px;background:#e1e1e1;border:1px solid #adadad;box-sizing:border-box"></div>
<span style="left:1315.32px;top:364.00px;font-size:11px;line-height:11px;color:#000;letter-spacing:-0.312px;">IP</span>
<div style="left:1355px;top:327px;width:51px;height:26px;background:#e1e1e1;border:1px solid #adadad;box-sizing:border-box"></div>
<span style="left:1367.71px;top:336.00px;font-size:11px;line-height:11px;color:#000;letter-spacing:-0.489px;">OOP</span>
<div style="left:1355px;top:355px;width:51px;height:26px;background:#e1e1e1;border:1px solid #adadad;box-sizing:border-box"></div>
<span style="left:1374.32px;top:364.00px;font-size:11px;line-height:11px;color:#000;letter-spacing:-0.312px;">IP</span>
<div style="left:1414px;top:298px;width:101px;height:26px;background:#e1e1e1;border:1px solid #adadad;box-sizing:border-box"></div>
<span style="left:1427.28px;top:307.00px;font-size:11px;line-height:11px;color:#000;letter-spacing:-0.328px;">Range Explorer</span>
<div style="left:1414px;top:327px;width:101px;height:26px;background:#e1e1e1;border:1px solid #adadad;box-sizing:border-box"></div>
<span style="left:1431.16px;top:336.00px;font-size:11px;line-height:11px;color:#000;letter-spacing:-0.315px;">Strategy + EV</span>
<div style="left:1414px;top:355px;width:76px;height:26px;background:#e1e1e1;border:1px solid #adadad;box-sizing:border-box"></div>
<span style="left:1431.45px;top:364.00px;font-size:11px;line-height:11px;color:#000;letter-spacing:-0.307px;">Strategy</span>
<div style="left:1492px;top:355px;width:23px;height:26px;background:#e1e1e1;border:1px solid #adadad;box-sizing:border-box"></div>
<span style="left:1498.99px;top:364.00px;font-size:11px;line-height:11px;color:#000;">&lt;</span>
<div style="left:1295px;top:393px;width:13px;height:13px;background:#fff;border:1px solid #333;box-sizing:border-box"></div>
<span style="left:1313.40px;top:395.00px;font-size:11px;line-height:11px;color:#000;letter-spacing:-0.185px;">refresh on new selection</span>
<div style="left:1295px;top:416px;width:13px;height:13px;background:#fff;border:1px solid #333;box-sizing:border-box"></div>
<span style="left:1313.40px;top:418.00px;font-size:11px;line-height:11px;color:#000;letter-spacing:-0.229px;">square size proportional to weight</span>
<div style="left:1295px;top:439px;width:13px;height:13px;background:#fff;border:1px solid #333;box-sizing:border-box"></div>
<span style="left:1313.40px;top:441.00px;font-size:11px;line-height:11px;color:#000;letter-spacing:-0.346px;">normalize squares</span>
<div style="left:1295px;top:462px;width:13px;height:13px;background:#fff;border:1px solid #333;box-sizing:border-box"></div>
<span style="left:1313.40px;top:464.00px;font-size:11px;line-height:11px;color:#000;letter-spacing:-0.202px;">bars width proportional to weight</span>
<svg style="left:1295px;top:393px" width="13" height="13" viewBox="0 0 13 13"><path d="M2.8 6.6 L5.3 9.2 L10.2 3.4" stroke="#222" stroke-width="1.3" fill="none"/></svg>
<span style="left:843.40px;top:394.00px;font-size:11px;line-height:11px;color:#000;letter-spacing:-0.302px;">OOP Range</span>
<span style="left:843.60px;top:418.00px;font-size:16px;line-height:16px;color:#000;">0</span>
<span style="left:935.40px;top:418.00px;font-size:16px;line-height:16px;color:#000;">0.25</span>
<span style="left:1051.40px;top:418.00px;font-size:16px;line-height:16px;color:#000;">0.5</span>
<span style="left:1157.40px;top:418.00px;font-size:16px;line-height:16px;color:#000;">0.75</span>
<span style="left:1274.60px;top:418.00px;font-size:16px;line-height:16px;color:#000;">1</span>
<div style="left:841px;top:436px;width:445px;height:52px;background:linear-gradient(90deg,#999999 0.0%,#9d9d97 2.5%,#a0a095 5.0%,#a3a394 7.5%,#a7a792 10.0%,#aaaa90 12.5%,#adad8e 15.0%,#b0b08c 17.5%,#b3b38a 20.0%,#b6b688 22.5%,#b9b986 25.0%,#bcbc84 27.5%,#bfbf82 30.0%,#c1c180 32.5%,#c4c47e 35.0%,#c7c77c 37.5%,#c9c979 40.0%,#cccc77 42.5%,#cfcf75 45.0%,#d1d172 47.5%,#d3d370 50.0%,#d6d66d 52.5%,#d8d86a 55.0%,#dbdb68 57.5%,#dddd65 60.0%,#dfdf62 62.5%,#e2e25f 65.0%,#e4e45c 67.5%,#e6e659 70.0%,#e8e855 72.5%,#eaea51 75.0%,#eded4e 77.5%,#efef4a 80.0%,#f1f145 82.5%,#f3f341 85.0%,#f5f53b 87.5%,#f7f736 90.0%,#f9f92f 92.5%,#fbfb27 95.0%,#fdfd1d 97.5%,#ffff00 100.0%);"></div>
<div style="left:841px;top:494px;width:683px;height:425px;background:#fff;"></div>
<div style="left:841px;top:494px;width:680px;height:423px;background:#000;"></div>
<div style="left:842px;top:495px;width:225px;height:104px;background:#696969;"></div>
<span style="left:849.88px;top:498.00px;font-size:38.0px;line-height:38.0px;color:#000;transform:scaleX(0.962);transform-origin:0 0;">A</span>
<span style="left:870.11px;top:498.00px;font-size:38.0px;line-height:38.0px;color:#000;transform:scaleX(1.015);transform-origin:0 0;font-family:'DejaVu Sans',sans-serif;">♠</span>
<span style="left:901.80px;top:499.00px;font-size:35.5px;line-height:35.5px;color:#920a00;transform:scaleX(1.052);transform-origin:0 0;font-family:'DejaVu Sans',sans-serif;clip-path:inset(0 0 2.30px 0);">Q</span>
<span style="left:929.05px;top:499.00px;font-size:36.0px;line-height:36.0px;color:#920a00;transform:scaleX(0.938);transform-origin:0 0;font-family:'DejaVu Sans',sans-serif;">♥</span>
<div style="left:1068px;top:495px;width:225px;height:104px;background:#999999;"></div>
<span style="left:1075.88px;top:498.00px;font-size:38.0px;line-height:38.0px;color:#000;transform:scaleX(0.962);transform-origin:0 0;">A</span>
<span style="left:1096.11px;top:498.00px;font-size:38.0px;line-height:38.0px;color:#000;transform:scaleX(1.015);transform-origin:0 0;font-family:'DejaVu Sans',sans-serif;">♠</span>
<span style="left:1127.80px;top:499.00px;font-size:35.5px;line-height:35.5px;color:#2a38c8;transform:scaleX(1.052);transform-origin:0 0;font-family:'DejaVu Sans',sans-serif;clip-path:inset(0 0 2.30px 0);">Q</span>
<span style="left:1151.80px;top:498.00px;font-size:38.0px;line-height:38.0px;color:#2a38c8;transform:scaleX(1.082);transform-origin:0 0;font-family:'DejaVu Sans',sans-serif;">♦</span>
<span style="left:1263.14px;top:550.00px;font-size:41.0px;line-height:41.0px;color:#000;transform:scaleX(0.975);transform-origin:0 0;">0</span>
<div style="left:1294px;top:495px;width:226px;height:104px;background:#999999;"></div>
<span style="left:1301.88px;top:498.00px;font-size:38.0px;line-height:38.0px;color:#000;transform:scaleX(0.962);transform-origin:0 0;">A</span>
<span style="left:1322.11px;top:498.00px;font-size:38.0px;line-height:38.0px;color:#000;transform:scaleX(1.015);transform-origin:0 0;font-family:'DejaVu Sans',sans-serif;">♠</span>
<span style="left:1353.80px;top:499.00px;font-size:35.5px;line-height:35.5px;color:#12aa2d;transform:scaleX(1.052);transform-origin:0 0;font-family:'DejaVu Sans',sans-serif;clip-path:inset(0 0 2.30px 0);">Q</span>
<span style="left:1379.63px;top:498.00px;font-size:38.0px;line-height:38.0px;color:#12aa2d;transform:scaleX(0.973);transform-origin:0 0;font-family:'DejaVu Sans',sans-serif;">♣</span>
<span style="left:1489.14px;top:550.00px;font-size:41.0px;line-height:41.0px;color:#000;transform:scaleX(0.975);transform-origin:0 0;">0</span>
<div style="left:842px;top:600px;width:225px;height:105px;background:#999999;"></div>
<span style="left:849.88px;top:603.00px;font-size:38.0px;line-height:38.0px;color:#920a00;transform:scaleX(0.962);transform-origin:0 0;">A</span>
<span style="left:872.25px;top:605.00px;font-size:36.0px;line-height:36.0px;color:#920a00;transform:scaleX(0.938);transform-origin:0 0;font-family:'DejaVu Sans',sans-serif;">♥</span>
<span style="left:901.80px;top:605.00px;font-size:35.5px;line-height:35.5px;color:#000;transform:scaleX(1.052);transform-origin:0 0;font-family:'DejaVu Sans',sans-serif;clip-path:inset(0 0 2.30px 0);">Q</span>
<span style="left:926.91px;top:603.00px;font-size:38.0px;line-height:38.0px;color:#000;transform:scaleX(1.015);transform-origin:0 0;font-family:'DejaVu Sans',sans-serif;">♠</span>
<span style="left:1037.14px;top:656.00px;font-size:41.0px;line-height:41.0px;color:#000;transform:scaleX(0.975);transform-origin:0 0;">0</span>
<div style="left:1068px;top:600px;width:225px;height:105px;background:#999999;"></div>
<span style="left:1075.88px;top:603.00px;font-size:38.0px;line-height:38.0px;color:#920a00;transform:scaleX(0.962);transform-origin:0 0;">A</span>
<span style="left:1098.25px;top:605.00px;font-size:36.0px;line-height:36.0px;color:#920a00;transform:scaleX(0.938);transform-origin:0 0;font-family:'DejaVu Sans',sans-serif;">♥</span>
<span style="left:1127.80px;top:605.00px;font-size:35.5px;line-height:35.5px;color:#2a38c8;transform:scaleX(1.052);transform-origin:0 0;font-family:'DejaVu Sans',sans-serif;clip-path:inset(0 0 2.30px 0);">Q</span>
<span style="left:1151.80px;top:603.00px;font-size:38.0px;line-height:38.0px;color:#2a38c8;transform:scaleX(1.082);transform-origin:0 0;font-family:'DejaVu Sans',sans-serif;">♦</span>
<span style="left:1263.14px;top:656.00px;font-size:41.0px;line-height:41.0px;color:#000;transform:scaleX(0.975);transform-origin:0 0;">0</span>
<div style="left:1294px;top:600px;width:226px;height:105px;background:#999999;"></div>
<span style="left:1301.88px;top:603.00px;font-size:38.0px;line-height:38.0px;color:#920a00;transform:scaleX(0.962);transform-origin:0 0;">A</span>
<span style="left:1324.25px;top:605.00px;font-size:36.0px;line-height:36.0px;color:#920a00;transform:scaleX(0.938);transform-origin:0 0;font-family:'DejaVu Sans',sans-serif;">♥</span>
<span style="left:1353.80px;top:605.00px;font-size:35.5px;line-height:35.5px;color:#12aa2d;transform:scaleX(1.052);transform-origin:0 0;font-family:'DejaVu Sans',sans-serif;clip-path:inset(0 0 2.30px 0);">Q</span>
<span style="left:1379.63px;top:603.00px;font-size:38.0px;line-height:38.0px;color:#12aa2d;transform:scaleX(0.973);transform-origin:0 0;font-family:'DejaVu Sans',sans-serif;">♣</span>
<span style="left:1489.14px;top:656.00px;font-size:41.0px;line-height:41.0px;color:#000;transform:scaleX(0.975);transform-origin:0 0;">0</span>
<div style="left:842px;top:706px;width:225px;height:104px;background:#999999;"></div>
<span style="left:849.88px;top:709.00px;font-size:38.0px;line-height:38.0px;color:#2a38c8;transform:scaleX(0.962);transform-origin:0 0;">A</span>
<span style="left:869.00px;top:709.00px;font-size:38.0px;line-height:38.0px;color:#2a38c8;transform:scaleX(1.082);transform-origin:0 0;font-family:'DejaVu Sans',sans-serif;">♦</span>
<span style="left:901.80px;top:710.00px;font-size:35.5px;line-height:35.5px;color:#000;transform:scaleX(1.052);transform-origin:0 0;font-family:'DejaVu Sans',sans-serif;clip-path:inset(0 0 2.30px 0);">Q</span>
<span style="left:926.91px;top:709.00px;font-size:38.0px;line-height:38.0px;color:#000;transform:scaleX(1.015);transform-origin:0 0;font-family:'DejaVu Sans',sans-serif;">♠</span>
<span style="left:1037.14px;top:761.00px;font-size:41.0px;line-height:41.0px;color:#000;transform:scaleX(0.975);transform-origin:0 0;">0</span>
<div style="left:1068px;top:706px;width:225px;height:104px;background:#696969;"></div>
<span style="left:1075.88px;top:709.00px;font-size:38.0px;line-height:38.0px;color:#2a38c8;transform:scaleX(0.962);transform-origin:0 0;">A</span>
<span style="left:1095.00px;top:709.00px;font-size:38.0px;line-height:38.0px;color:#2a38c8;transform:scaleX(1.082);transform-origin:0 0;font-family:'DejaVu Sans',sans-serif;">♦</span>
<span style="left:1127.80px;top:710.00px;font-size:35.5px;line-height:35.5px;color:#920a00;transform:scaleX(1.052);transform-origin:0 0;font-family:'DejaVu Sans',sans-serif;clip-path:inset(0 0 2.30px 0);">Q</span>
<span style="left:1155.05px;top:710.00px;font-size:36.0px;line-height:36.0px;color:#920a00;transform:scaleX(0.938);transform-origin:0 0;font-family:'DejaVu Sans',sans-serif;">♥</span>
<div style="left:1294px;top:706px;width:226px;height:104px;background:#999999;"></div>
<span style="left:1301.88px;top:709.00px;font-size:38.0px;line-height:38.0px;color:#2a38c8;transform:scaleX(0.962);transform-origin:0 0;">A</span>
<span style="left:1321.00px;top:709.00px;font-size:38.0px;line-height:38.0px;color:#2a38c8;transform:scaleX(1.082);transform-origin:0 0;font-family:'DejaVu Sans',sans-serif;">♦</span>
<span style="left:1353.80px;top:710.00px;font-size:35.5px;line-height:35.5px;color:#12aa2d;transform:scaleX(1.052);transform-origin:0 0;font-family:'DejaVu Sans',sans-serif;clip-path:inset(0 0 2.30px 0);">Q</span>
<span style="left:1379.63px;top:709.00px;font-size:38.0px;line-height:38.0px;color:#12aa2d;transform:scaleX(0.973);transform-origin:0 0;font-family:'DejaVu Sans',sans-serif;">♣</span>
<span style="left:1489.14px;top:761.00px;font-size:41.0px;line-height:41.0px;color:#000;transform:scaleX(0.975);transform-origin:0 0;">0</span>
<div style="left:842px;top:811px;width:225px;height:105px;background:#999999;"></div>
<span style="left:849.88px;top:814.00px;font-size:38.0px;line-height:38.0px;color:#12aa2d;transform:scaleX(0.962);transform-origin:0 0;">A</span>
<span style="left:870.83px;top:814.00px;font-size:38.0px;line-height:38.0px;color:#12aa2d;transform:scaleX(0.973);transform-origin:0 0;font-family:'DejaVu Sans',sans-serif;">♣</span>
<span style="left:901.80px;top:816.00px;font-size:35.5px;line-height:35.5px;color:#000;transform:scaleX(1.052);transform-origin:0 0;font-family:'DejaVu Sans',sans-serif;clip-path:inset(0 0 2.30px 0);">Q</span>
<span style="left:926.91px;top:814.00px;font-size:38.0px;line-height:38.0px;color:#000;transform:scaleX(1.015);transform-origin:0 0;font-family:'DejaVu Sans',sans-serif;">♠</span>
<span style="left:1037.14px;top:867.00px;font-size:41.0px;line-height:41.0px;color:#000;transform:scaleX(0.975);transform-origin:0 0;">0</span>
<div style="left:1068px;top:811px;width:225px;height:105px;background:#696969;"></div>
<span style="left:1075.88px;top:814.00px;font-size:38.0px;line-height:38.0px;color:#12aa2d;transform:scaleX(0.962);transform-origin:0 0;">A</span>
<span style="left:1096.83px;top:814.00px;font-size:38.0px;line-height:38.0px;color:#12aa2d;transform:scaleX(0.973);transform-origin:0 0;font-family:'DejaVu Sans',sans-serif;">♣</span>
<span style="left:1127.80px;top:816.00px;font-size:35.5px;line-height:35.5px;color:#920a00;transform:scaleX(1.052);transform-origin:0 0;font-family:'DejaVu Sans',sans-serif;clip-path:inset(0 0 2.30px 0);">Q</span>
<span style="left:1155.05px;top:816.00px;font-size:36.0px;line-height:36.0px;color:#920a00;transform:scaleX(0.938);transform-origin:0 0;font-family:'DejaVu Sans',sans-serif;">♥</span>
<div style="left:1294px;top:811px;width:226px;height:105px;background:#999999;"></div>
<span style="left:1301.88px;top:814.00px;font-size:38.0px;line-height:38.0px;color:#12aa2d;transform:scaleX(0.962);transform-origin:0 0;">A</span>
<span style="left:1322.83px;top:814.00px;font-size:38.0px;line-height:38.0px;color:#12aa2d;transform:scaleX(0.973);transform-origin:0 0;font-family:'DejaVu Sans',sans-serif;">♣</span>
<span style="left:1353.80px;top:816.00px;font-size:35.5px;line-height:35.5px;color:#2a38c8;transform:scaleX(1.052);transform-origin:0 0;font-family:'DejaVu Sans',sans-serif;clip-path:inset(0 0 2.30px 0);">Q</span>
<span style="left:1377.80px;top:814.00px;font-size:38.0px;line-height:38.0px;color:#2a38c8;transform:scaleX(1.082);transform-origin:0 0;font-family:'DejaVu Sans',sans-serif;">♦</span>
<span style="left:1489.14px;top:867.00px;font-size:41.0px;line-height:41.0px;color:#000;transform:scaleX(0.975);transform-origin:0 0;">0</span>
<div style="left:8px;top:932px;width:1525px;height:1px;background:#d7d7d7;"></div>
<span style="left:12.40px;top:938.00px;font-size:12px;line-height:12px;color:#000;letter-spacing:-0.412px;">Connected to .\PioSOLVER-pro19.exe. PioSOLVER-pro 1.9.2 (Sep 27 2017, 09:07:42)</span>
<span style="left:1486.20px;top:936.00px;font-size:12px;line-height:12px;color:#000;letter-spacing:-0.922px;">Done</span>
<div style="left:1528px;top:949px;width:2px;height:2px;background:#a8a8a8;"></div>
<div style="left:1524px;top:949px;width:2px;height:2px;background:#a8a8a8;"></div>
<div style="left:1520px;top:949px;width:2px;height:2px;background:#a8a8a8;"></div>
<div style="left:1528px;top:945px;width:2px;height:2px;background:#a8a8a8;"></div>
<div style="left:1524px;top:945px;width:2px;height:2px;background:#a8a8a8;"></div>
<div style="left:1528px;top:941px;width:2px;height:2px;background:#a8a8a8;"></div>
</body></html>
